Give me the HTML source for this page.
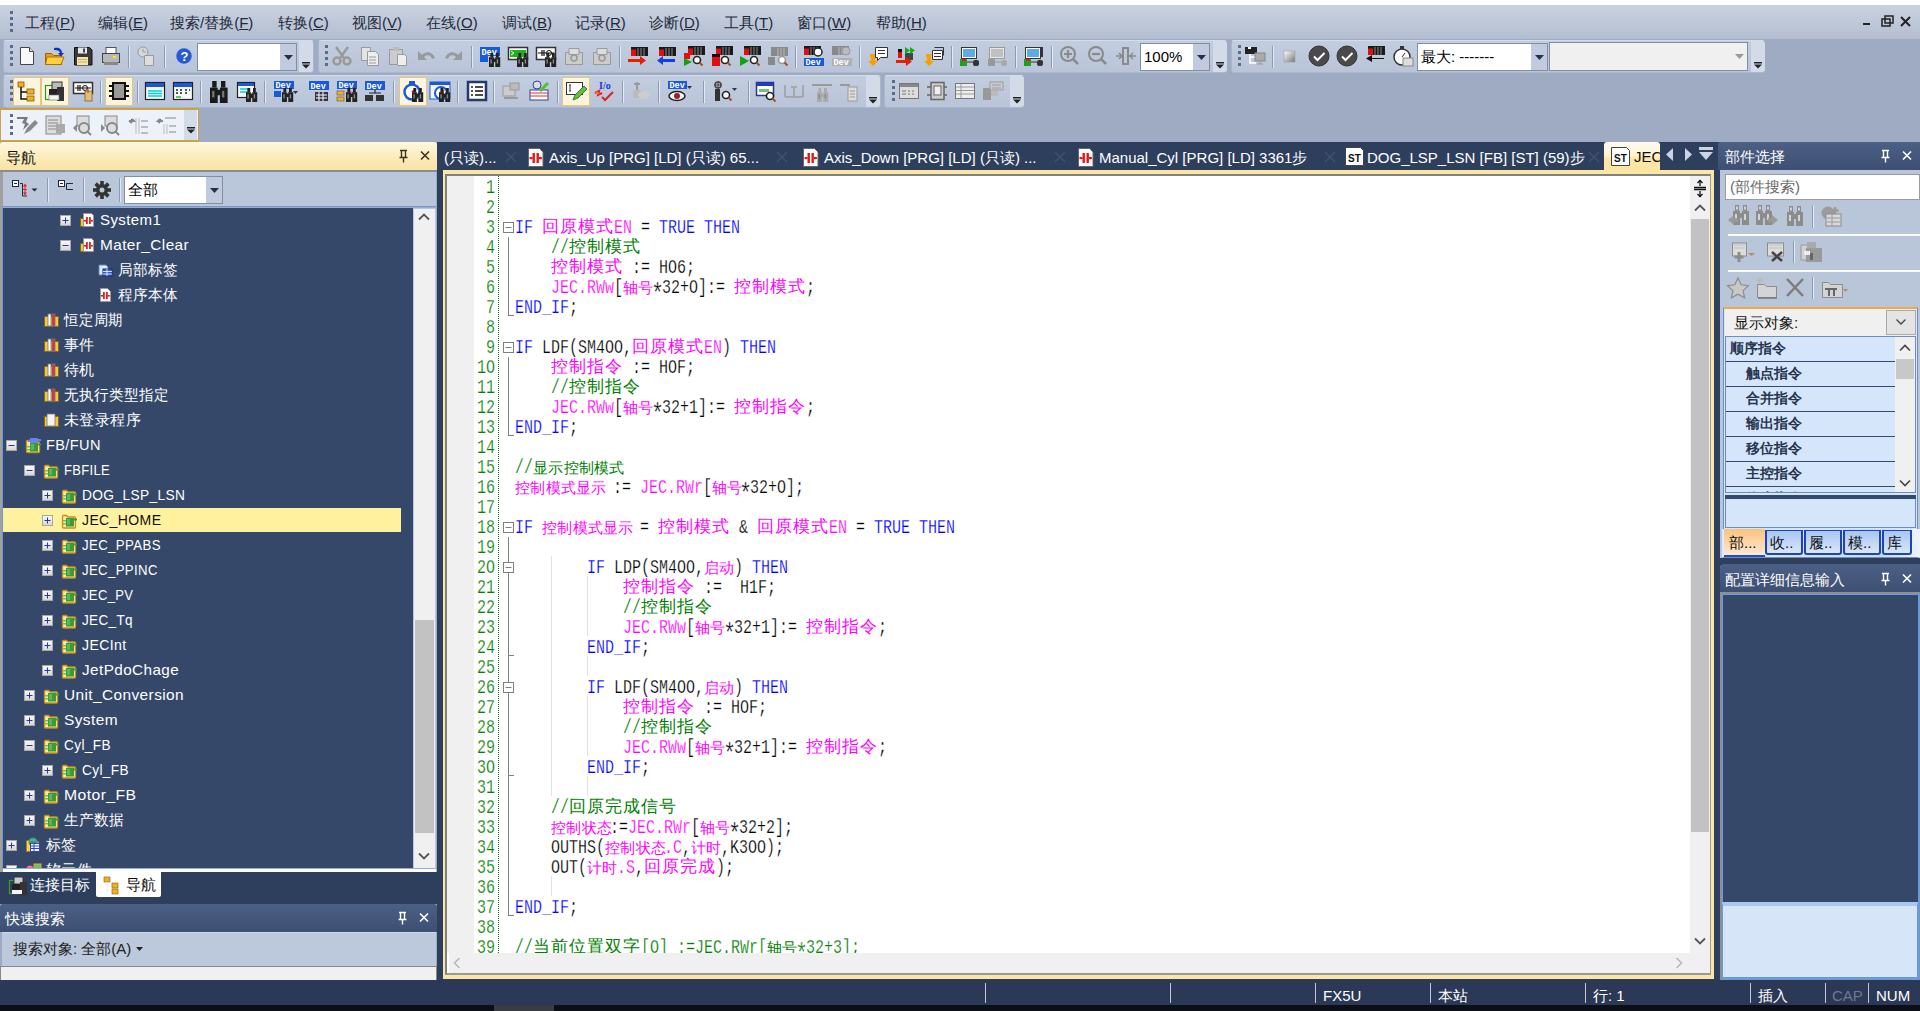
<!DOCTYPE html><html><head><meta charset="utf-8"><style>
*{margin:0;padding:0;box-sizing:border-box}
html,body{width:1920px;height:1011px;overflow:hidden;background:#9eabc3}
body{position:relative;font-family:"Liberation Sans",sans-serif;font-size:15px;color:#000}
div{position:absolute}
.t{white-space:nowrap;line-height:20px}
svg{position:absolute;overflow:visible}
.cd{position:absolute;white-space:pre;line-height:20px;height:20px}
.ca{font-family:"Liberation Mono",monospace;font-size:20.3px;transform:scaleX(.739);transform-origin:0 0;line-height:20px;top:1.65px;-webkit-text-stroke:.25px #fff}
.cc{font-size:17px;line-height:20px;top:1px}
.cs{font-size:14.5px;line-height:20px;top:2px}

.w{color:#fff}
.tb{border-radius:3px;background:linear-gradient(#c3cde0,#b9c4d8);border:1px solid #aab6cb;border-top-color:#d5ddea}
.grip{width:3px;height:3px;background:#5a6b8a;box-shadow:0 6px 0 #5a6b8a,0 12px 0 #5a6b8a,0 18px 0 #5a6b8a}
.sep{width:1px;background:#8e9ab0;border-right:1px solid #e0e6f0}
</style></head><body><div style="left:0px;top:0px;width:1920px;height:5px;background:#fff"></div><div style="left:0px;top:5px;width:1920px;height:34px;background:linear-gradient(#cad2e1,#b4bed1)"></div><div class="grip" style="left:10px;top:11px;width:3px;height:3px;"></div><div class="t" style="left:25px;top:13px;color:#1e2a3c;font-size:15px">工程(<u>P</u>)</div><div class="t" style="left:98px;top:13px;color:#1e2a3c;font-size:15px">编辑(<u>E</u>)</div><div class="t" style="left:170px;top:13px;color:#1e2a3c;font-size:15px">搜索/替换(<u>F</u>)</div><div class="t" style="left:278px;top:13px;color:#1e2a3c;font-size:15px">转换(<u>C</u>)</div><div class="t" style="left:352px;top:13px;color:#1e2a3c;font-size:15px">视图(<u>V</u>)</div><div class="t" style="left:426px;top:13px;color:#1e2a3c;font-size:15px">在线(<u>O</u>)</div><div class="t" style="left:502px;top:13px;color:#1e2a3c;font-size:15px">调试(<u>B</u>)</div><div class="t" style="left:575px;top:13px;color:#1e2a3c;font-size:15px">记录(<u>R</u>)</div><div class="t" style="left:649px;top:13px;color:#1e2a3c;font-size:15px">诊断(<u>D</u>)</div><div class="t" style="left:724px;top:13px;color:#1e2a3c;font-size:15px">工具(<u>T</u>)</div><div class="t" style="left:797px;top:13px;color:#1e2a3c;font-size:15px">窗口(<u>W</u>)</div><div class="t" style="left:876px;top:13px;color:#1e2a3c;font-size:15px">帮助(<u>H</u>)</div><svg style="left:1860px;top:14px" width="60" height="16"><rect x="3" y="9" width="7" height="2" fill="#222"/><rect x="22" y="5" width="8" height="7" fill="none" stroke="#222" stroke-width="1.5"/><rect x="25" y="2" width="8" height="7" fill="none" stroke="#222" stroke-width="1.5"/><path d="M41 3 L50 12 M50 3 L41 12" stroke="#222" stroke-width="2"/></svg><div class="tb" style="left:3px;top:40px;width:311px;height:33px;"></div><div class="tb" style="left:318px;top:40px;width:909px;height:33px;"></div><div class="tb" style="left:1231px;top:40px;width:534px;height:33px;"></div><div class="tb" style="left:3px;top:75px;width:878px;height:33px;"></div><div class="tb" style="left:884px;top:75px;width:140px;height:33px;"></div><div style="left:0px;top:108px;width:199px;height:34px;background:#edf2fa;border:2px solid #c9a24a;border-left-width:1px;border-right-width:1px"></div><div style="left:10px;top:45px;width:3px;height:3px;background:#5b6b8b"></div><div style="left:10px;top:51px;width:3px;height:3px;background:#5b6b8b"></div><div style="left:10px;top:57px;width:3px;height:3px;background:#5b6b8b"></div><div style="left:10px;top:63px;width:3px;height:3px;background:#5b6b8b"></div><svg style="left:16px;top:45px" width="22" height="22"><path d="M4.5 2.5h9l4 4v13h-13z" fill="#f8f8f8" stroke="#444"/><path d="M13.5 2.5v4h4" fill="#ddd" stroke="#444"/></svg><svg style="left:44px;top:45px" width="22" height="22"><path d="M1.5 8.5h6l2 2h8v9h-16z" fill="#e8a010" stroke="#a06000"/><path d="M3 12h17l-3 7.5H1.5z" fill="#fcd040" stroke="#b07000"/><path d="M10 3c5-1 8 1 8 5l2 0-3 3.5-3-3.5h2c0-2-2-3-6-3z" fill="#1030c0"/></svg><svg style="left:72px;top:45px" width="22" height="22"><path d="M2.5 2.5h15l2.5 2.5v15h-17.5z" fill="#3a3a3a" stroke="#111"/><rect x="6" y="2.5" width="9" height="6" fill="#e8e8e8"/><rect x="11" y="3.5" width="2" height="4" fill="#444"/><rect x="5" y="12" width="11" height="8" fill="#f4e4a8"/><path d="M6 14.5h9M6 17h9" stroke="#c8b070"/></svg><svg style="left:100px;top:45px" width="22" height="22"><rect x="6" y="2.5" width="10" height="6" fill="#fff" stroke="#555"/><rect x="2.5" y="8.5" width="17" height="9" fill="#b8b8b8" stroke="#444"/><rect x="4" y="17" width="14" height="3" fill="#888"/><rect x="13" y="11" width="3" height="2" fill="#f0f000"/></svg><div style="left:128px;top:46px;width:1px;height:22px;background:#8d9bb2;box-shadow:1px 0 0 #e4eaf3"></div><svg style="left:136px;top:45px" width="22" height="22"><circle cx="7" cy="7" r="5" fill="#d8d8d8" stroke="#9a9a9a"/><path d="M7 4v3h3" stroke="#9a9a9a" fill="none"/><path d="M8.5 10.5h9v10h-9z" fill="#ddd" stroke="#9a9a9a"/></svg><div style="left:164px;top:46px;width:1px;height:22px;background:#8d9bb2;box-shadow:1px 0 0 #e4eaf3"></div><svg style="left:173px;top:45px" width="22" height="22"><circle cx="11" cy="11" r="8.5" fill="#2a5ad0" stroke="#b8c8f0" stroke-width="1.5"/><text x="7.5" y="16" font-family="Liberation Sans" font-weight="bold" font-size="13" fill="#fff">?</text></svg><div style="left:197px;top:43px;width:100px;height:28px;background:#fff;border:1px solid #7f8fa8"></div><div style="left:280px;top:44px;width:16px;height:26px;background:#c1cbdd"></div><svg style="left:284px;top:55px" width="9" height="5"><path d="M0 0h9l-4.5 5z" fill="#233050"/></svg><div style="left:299px;top:41px;width:14px;height:31px;background:#d3dbe8;border-radius:0 3px 3px 0"></div><svg style="left:302px;top:62px" width="9" height="7"><rect x="0" y="0" width="8" height="1.5" fill="#222"/><path d="M0 2.5h8l-4 4z" fill="#222"/></svg><div style="left:325px;top:45px;width:3px;height:3px;background:#5b6b8b"></div><div style="left:325px;top:51px;width:3px;height:3px;background:#5b6b8b"></div><div style="left:325px;top:57px;width:3px;height:3px;background:#5b6b8b"></div><div style="left:325px;top:63px;width:3px;height:3px;background:#5b6b8b"></div><svg style="left:331px;top:45px" width="22" height="22"><path d="M5 2l8 11M17 2l-8 11" stroke="#9a9a9a" stroke-width="2.5"/><circle cx="6" cy="16" r="3.5" fill="none" stroke="#9a9a9a" stroke-width="2.5"/><circle cx="16" cy="16" r="3.5" fill="none" stroke="#9a9a9a" stroke-width="2.5"/></svg><svg style="left:359px;top:45px" width="22" height="22"><path d="M2.5 2.5h9v13h-9z" fill="#e4e4e4" stroke="#9a9a9a"/><path d="M8.5 6.5h8l3 3v11h-11z" fill="#eee" stroke="#9a9a9a"/><path d="M10 12h7M10 15h7M10 18h7" stroke="#9a9a9a"/></svg><svg style="left:387px;top:45px" width="22" height="22"><path d="M2.5 4.5h13v15h-13z" fill="#ccc" stroke="#9a9a9a"/><rect x="6" y="2" width="6" height="4" fill="#bbb"/><path d="M10.5 9.5h7l2 2v9h-9z" fill="#eee" stroke="#9a9a9a"/></svg><svg style="left:415px;top:45px" width="22" height="22"><path d="M3 6v9h9l-3-3c3-3 7-2 8 2l3-1c-2-6-9-8-13-3z" fill="#9a9a9a"/></svg><svg style="left:443px;top:45px" width="22" height="22"><path d="M19 6v9h-9l3-3c-3-3-7-2-8 2l-3-1c2-6 9-8 13-3z" fill="#9a9a9a"/></svg><div style="left:471px;top:46px;width:1px;height:22px;background:#8d9bb2;box-shadow:1px 0 0 #e4eaf3"></div><svg style="left:479px;top:45px" width="22" height="22"><rect x="1" y="2" width="20" height="9" fill="#1a5ad8"/><text x="2.5" y="10" font-family="Liberation Mono" font-size="8.5" font-weight="bold" fill="#fff">Dev</text><rect x="1" y="11" width="8" height="6" fill="#1a5ad8"/><g transform="translate(10,8) scale(0.7)"><rect x="2" y="0" width="4" height="6" fill="#222"/><rect x="10" y="0" width="4" height="6" fill="#222"/><rect x="0" y="6" width="7" height="14" fill="#222"/><rect x="9" y="6" width="7" height="14" fill="#222"/><rect x="6" y="8" width="4" height="5" fill="#222"/><rect x="2" y="9" width="2" height="6" fill="#888"/><rect x="11" y="9" width="2" height="6" fill="#888"/></g></svg><svg style="left:507px;top:45px" width="22" height="22"><rect x="1.5" y="2.5" width="19" height="12" fill="#fff" stroke="#333" stroke-width="1.5"/><rect x="3" y="5" width="16" height="7" fill="#20b020"/><path d="M4 6l3 2-3 2" stroke="#fff" fill="none"/><g transform="translate(10,8) scale(0.7)"><rect x="2" y="0" width="4" height="6" fill="#222"/><rect x="10" y="0" width="4" height="6" fill="#222"/><rect x="0" y="6" width="7" height="14" fill="#222"/><rect x="9" y="6" width="7" height="14" fill="#222"/><rect x="6" y="8" width="4" height="5" fill="#222"/><rect x="2" y="9" width="2" height="6" fill="#888"/><rect x="11" y="9" width="2" height="6" fill="#888"/></g></svg><svg style="left:535px;top:45px" width="22" height="22"><rect x="1.5" y="2.5" width="19" height="12" fill="#fff" stroke="#333" stroke-width="1.5"/><path d="M3 8h16M7 5v6M9 5v6" stroke="#111" stroke-width="1.2"/><circle cx="14" cy="8" r="2.5" fill="none" stroke="#111"/><g transform="translate(10,8) scale(0.7)"><rect x="2" y="0" width="4" height="6" fill="#222"/><rect x="10" y="0" width="4" height="6" fill="#222"/><rect x="0" y="6" width="7" height="14" fill="#222"/><rect x="9" y="6" width="7" height="14" fill="#222"/><rect x="6" y="8" width="4" height="5" fill="#222"/><rect x="2" y="9" width="2" height="6" fill="#888"/><rect x="11" y="9" width="2" height="6" fill="#888"/></g></svg><svg style="left:563px;top:45px" width="22" height="22"><path d="M2.5 7.5h17v12h-17z" fill="#ccc" stroke="#9a9a9a"/><path d="M6 3.5h10v6H6z" fill="#ddd" stroke="#9a9a9a"/><circle cx="11" cy="13" r="3" fill="none" stroke="#9a9a9a" stroke-width="1.5"/></svg><svg style="left:591px;top:45px" width="22" height="22"><path d="M2.5 7.5h17v12h-17z" fill="#ccc" stroke="#9a9a9a"/><path d="M6 3.5h10v6H6z" fill="#ddd" stroke="#9a9a9a"/><circle cx="11" cy="13" r="3" fill="none" stroke="#9a9a9a" stroke-width="1.5"/></svg><div style="left:619px;top:46px;width:1px;height:22px;background:#8d9bb2;box-shadow:1px 0 0 #e4eaf3"></div><svg style="left:627px;top:45px" width="22" height="22"><rect x="4" y="2" width="17" height="9" fill="#1a1a1a"/><rect x="4" y="2" width="5" height="9" fill="#e01010"/><rect x="4" y="2" width="5" height="2.5" fill="#1a1a1a"/><path d="M11 3v8M14 3v8M17 3v8" stroke="#777" stroke-width="1.2"/><path d="M1 14h12v-3l6 4.5-6 4.5v-3H1z" fill="#e82000"/></svg><svg style="left:655px;top:45px" width="22" height="22"><rect x="4" y="2" width="17" height="9" fill="#1a1a1a"/><rect x="4" y="2" width="5" height="9" fill="#e01010"/><rect x="4" y="2" width="5" height="2.5" fill="#1a1a1a"/><path d="M11 3v8M14 3v8M17 3v8" stroke="#777" stroke-width="1.2"/><path d="M20 14H8v-3l-6 4.5 6 4.5v-3h12z" fill="#1040e0"/></svg><svg style="left:683px;top:45px" width="22" height="22"><rect x="5" y="1" width="17" height="9" fill="#1a1a1a"/><rect x="5" y="1" width="5" height="9" fill="#e01010"/><rect x="5" y="1" width="5" height="2.5" fill="#1a1a1a"/><path d="M12 2v8M15 2v8M18 2v8" stroke="#777" stroke-width="1.2"/><rect x="1" y="8" width="6" height="6" fill="#e01010"/><path d="M1 13l8 4-8 4z" fill="#10a010"/><circle cx="14" cy="15" r="3.5" fill="#fff" stroke="#222" stroke-width="1.6"/><path d="M16.5 17.5l3 3" stroke="#a05020" stroke-width="2"/></svg><svg style="left:711px;top:45px" width="22" height="22"><rect x="5" y="1" width="17" height="9" fill="#1a1a1a"/><rect x="5" y="1" width="5" height="9" fill="#e01010"/><rect x="5" y="1" width="5" height="2.5" fill="#1a1a1a"/><path d="M12 2v8M15 2v8M18 2v8" stroke="#777" stroke-width="1.2"/><rect x="1" y="9" width="8" height="12" fill="#e01010"/><rect x="1" y="9" width="8" height="3" fill="#111"/><circle cx="14" cy="15" r="3.5" fill="#fff" stroke="#222" stroke-width="1.6"/><path d="M16.5 17.5l3 3" stroke="#a05020" stroke-width="2"/></svg><svg style="left:739px;top:45px" width="22" height="22"><rect x="5" y="1" width="17" height="9" fill="#1a1a1a"/><rect x="5" y="1" width="5" height="9" fill="#e01010"/><rect x="5" y="1" width="5" height="2.5" fill="#1a1a1a"/><path d="M12 2v8M15 2v8M18 2v8" stroke="#777" stroke-width="1.2"/><path d="M1 11l9 5-9 5z" fill="#10a010"/><circle cx="15" cy="15" r="3.5" fill="#fff" stroke="#222" stroke-width="1.6"/><path d="M17.5 17.5l3 3" stroke="#a05020" stroke-width="2"/></svg><svg style="left:767px;top:45px" width="22" height="22"><rect x="4" y="2" width="17" height="9" fill="#8a8a8a"/><rect x="4" y="2" width="5" height="9" fill="#888"/><rect x="4" y="2" width="5" height="2.5" fill="#8a8a8a"/><path d="M11 3v8M14 3v8M17 3v8" stroke="#b0b0b0" stroke-width="1.2"/><rect x="1" y="12" width="7" height="8" fill="#8a8a8a"/><circle cx="15" cy="15" r="3.5" fill="#fff" stroke="#999" stroke-width="1.6"/><path d="M17.5 17.5l3 3" stroke="#a05020" stroke-width="2"/></svg><div style="left:795px;top:46px;width:1px;height:22px;background:#8d9bb2;box-shadow:1px 0 0 #e4eaf3"></div><svg style="left:803px;top:45px" width="22" height="22"><rect x="1" y="1" width="17" height="9" fill="#1a1a1a"/><rect x="1" y="1" width="5" height="9" fill="#e01010"/><rect x="1" y="1" width="5" height="2.5" fill="#1a1a1a"/><path d="M8 2v8M11 2v8M14 2v8" stroke="#777" stroke-width="1.2"/><circle cx="15" cy="7" r="4" fill="#fff" stroke="#222" stroke-width="1.5"/><rect x="1" y="13" width="20" height="8" fill="#1a5ad8"/><text x="2.5" y="20" font-family="Liberation Mono" font-size="8.5" font-weight="bold" fill="#fff">Dev</text></svg><svg style="left:831px;top:45px" width="22" height="22"><rect x="1" y="1" width="17" height="9" fill="#8a8a8a"/><rect x="1" y="1" width="5" height="9" fill="#888"/><rect x="1" y="1" width="5" height="2.5" fill="#8a8a8a"/><path d="M8 2v8M11 2v8M14 2v8" stroke="#b0b0b0" stroke-width="1.2"/><circle cx="15" cy="6" r="4" fill="#bbb" stroke="#999"/><rect x="1" y="13" width="20" height="8" fill="#b0b0b0"/><text x="2.5" y="20" font-family="Liberation Mono" font-size="8.5" font-weight="bold" fill="#fff">Dev</text></svg><div style="left:859px;top:46px;width:1px;height:22px;background:#8d9bb2;box-shadow:1px 0 0 #e4eaf3"></div><svg style="left:867px;top:45px" width="22" height="22"><path d="M8.5 2.5h12v10h-7l-3 3v-3h-2z" fill="#fff" stroke="#333"/><path d="M11 5.5h7M11 8.5h7" stroke="#333"/><path d="M3 9h5v7h3l-5 5-5-5h3v-4H3z" fill="#f8a000"/></svg><svg style="left:895px;top:45px" width="22" height="22"><rect x="3" y="6" width="4" height="7" fill="#e01010"/><rect x="3" y="4" width="4" height="3" fill="#111"/><rect x="10" y="8" width="8" height="7" fill="#444"/><path d="M10 2l5 3.5-5 3.5zM15 2l5 3.5-5 3.5z" fill="#10b010"/><path d="M1 15h10v-3l6 4.5-6 4.5v-3H1z" fill="#e82000"/></svg><svg style="left:923px;top:45px" width="22" height="22"><path d="M9.5 5.5h10v9h-10z" fill="#fff" stroke="#333"/><path d="M11.5 2.5h9v8" fill="none" stroke="#333"/><path d="M11 8.5h7M11 11.5h7" stroke="#333"/><path d="M3 9h5v7h3l-5 5-5-5h3v-4H3z" fill="#f8a000"/></svg><div style="left:951px;top:46px;width:1px;height:22px;background:#8d9bb2;box-shadow:1px 0 0 #e4eaf3"></div><svg style="left:959px;top:45px" width="22" height="22"><rect x="2.5" y="2.5" width="15" height="11" fill="#fff" stroke="#333"/><rect x="4" y="4" width="12" height="8" fill="#60a8f0"/><rect x="1" y="14" width="7" height="7" fill="#20a020"/><rect x="3" y="14" width="4" height="2" fill="#e02020"/><path d="M8 17h6" stroke="#333"/><rect x="14" y="15" width="6" height="6" rx="2" fill="#333"/></svg><svg style="left:987px;top:45px" width="22" height="22"><rect x="2.5" y="2.5" width="15" height="11" fill="#e8e8e8" stroke="#9a9a9a"/><rect x="4" y="4" width="12" height="8" fill="#c0c0c0"/><rect x="1" y="14" width="7" height="7" fill="#999"/><path d="M8 17h6" stroke="#9a9a9a"/><rect x="14" y="15" width="6" height="6" rx="2" fill="#aaa"/></svg><div style="left:1015px;top:46px;width:1px;height:22px;background:#8d9bb2;box-shadow:1px 0 0 #e4eaf3"></div><svg style="left:1023px;top:45px" width="22" height="22"><rect x="2.5" y="2.5" width="15" height="11" fill="#fff" stroke="#333"/><rect x="4" y="4" width="12" height="8" fill="#60a8f0"/><path d="M19 2v10" stroke="#333" stroke-width="2"/><rect x="1" y="14" width="7" height="7" fill="#20a020"/><rect x="3" y="14" width="4" height="2" fill="#e02020"/><path d="M8 17h6" stroke="#333"/><rect x="14" y="15" width="6" height="6" rx="2" fill="#333"/></svg><div style="left:1051px;top:46px;width:1px;height:22px;background:#8d9bb2;box-shadow:1px 0 0 #e4eaf3"></div><svg style="left:1059px;top:45px" width="22" height="22"><circle cx="9" cy="9" r="7" fill="none" stroke="#8a8a8a" stroke-width="2"/><path d="M5 9h8M9 5v8" stroke="#8a8a8a" stroke-width="2.2"/><path d="M14 14l5 5" stroke="#8a8a8a" stroke-width="2.5"/></svg><svg style="left:1087px;top:45px" width="22" height="22"><circle cx="9" cy="9" r="7" fill="none" stroke="#8a8a8a" stroke-width="2"/><path d="M5 9h8" stroke="#8a8a8a" stroke-width="2.2"/><path d="M14 14l5 5" stroke="#8a8a8a" stroke-width="2.5"/></svg><svg style="left:1115px;top:45px" width="22" height="22"><rect x="8" y="3" width="5" height="16" fill="none" stroke="#8a8a8a" stroke-width="2"/><path d="M1 11h6M14 11h7M4 8l3 3-3 3M18 8l-3 3 3 3" stroke="#8a8a8a" stroke-width="1.5" fill="none"/></svg><div style="left:1140px;top:43px;width:70px;height:28px;background:#fff;border:1px solid #7f8fa8"></div><div style="left:1193px;top:44px;width:16px;height:26px;background:#c1cbdd"></div><svg style="left:1197px;top:55px" width="9" height="5"><path d="M0 0h9l-4.5 5z" fill="#233050"/></svg><div class="t" style="left:1144px;top:47px">100%</div><div style="left:1213px;top:41px;width:14px;height:31px;background:#d3dbe8;border-radius:0 3px 3px 0"></div><svg style="left:1216px;top:62px" width="9" height="7"><rect x="0" y="0" width="8" height="1.5" fill="#222"/><path d="M0 2.5h8l-4 4z" fill="#222"/></svg><div style="left:1238px;top:45px;width:3px;height:3px;background:#5b6b8b"></div><div style="left:1238px;top:51px;width:3px;height:3px;background:#5b6b8b"></div><div style="left:1238px;top:57px;width:3px;height:3px;background:#5b6b8b"></div><div style="left:1238px;top:63px;width:3px;height:3px;background:#5b6b8b"></div><svg style="left:1244px;top:45px" width="22" height="22"><rect x="1" y="2" width="12" height="7" fill="#222"/><rect x="4" y="2" width="3" height="2" fill="#fff"/><path d="M6 9v9h6M6 12h6" stroke="#fff" stroke-width="1.5" fill="none"/><rect x="11" y="8" width="10" height="8" fill="#aaa" stroke="#888"/><path d="M16 16v3M13 19h6" stroke="#999"/></svg><div style="left:1272px;top:46px;width:1px;height:22px;background:#8d9bb2;box-shadow:1px 0 0 #e4eaf3"></div><svg style="left:1279px;top:45px" width="22" height="22"><defs><linearGradient id="sq" x1="0" y1="0" x2="1" y2="1"><stop offset="0" stop-color="#fff"/><stop offset="1" stop-color="#777"/></linearGradient></defs><rect x="5" y="6" width="11" height="11" fill="url(#sq)" stroke="#999" stroke-width=".5"/></svg><svg style="left:1308px;top:45px" width="22" height="22"><circle cx="11" cy="11" r="10" fill="#4a4a4a" stroke="#333"/><path d="M6 11.5l3.5 3.5 7-7" stroke="#fff" stroke-width="2" fill="none"/></svg><svg style="left:1336px;top:45px" width="22" height="22"><circle cx="11" cy="11" r="10" fill="#4a4a4a" stroke="#333"/><path d="M6 11.5l3.5 3.5 7-7" stroke="#fff" stroke-width="2" fill="none"/></svg><svg style="left:1364px;top:45px" width="22" height="22"><rect x="4" y="1" width="17" height="9" fill="#1a1a1a"/><rect x="4" y="1" width="5" height="9" fill="#e01010"/><rect x="4" y="1" width="5" height="2.5" fill="#1a1a1a"/><path d="M11 2v8M14 2v8M17 2v8" stroke="#777" stroke-width="1.2"/><path d="M20 13H8v-3l-6 3.5 6 3.5v-3h12z" fill="#111"/></svg><svg style="left:1392px;top:45px" width="22" height="22"><circle cx="10" cy="12" r="8" fill="#fff" stroke="#333" stroke-width="1.5"/><rect x="8" y="1" width="4" height="3" fill="#333"/><path d="M10 12l3-4" stroke="#333"/><rect x="11" y="13" width="10" height="8" fill="#ddd" stroke="#888"/></svg><div style="left:1417px;top:43px;width:131px;height:28px;background:#fff;border:1px solid #7f8fa8"></div><div style="left:1531px;top:44px;width:16px;height:26px;background:#c1cbdd"></div><svg style="left:1535px;top:55px" width="9" height="5"><path d="M0 0h9l-4.5 5z" fill="#233050"/></svg><div class="t" style="left:1421px;top:47px">最大: -------</div><div style="left:1549px;top:42px;width:199px;height:29px;background:#f0f0f0;border:1px solid #7f8fa8"></div><svg style="left:1735px;top:54px" width="9" height="5"><path d="M0 0h9l-4.5 5z" fill="#999"/></svg><div style="left:1751px;top:41px;width:14px;height:31px;background:#d3dbe8;border-radius:0 3px 3px 0"></div><svg style="left:1754px;top:62px" width="9" height="7"><rect x="0" y="0" width="8" height="1.5" fill="#222"/><path d="M0 2.5h8l-4 4z" fill="#222"/></svg><div style="left:10px;top:80px;width:3px;height:3px;background:#5b6b8b"></div><div style="left:10px;top:86px;width:3px;height:3px;background:#5b6b8b"></div><div style="left:10px;top:92px;width:3px;height:3px;background:#5b6b8b"></div><div style="left:10px;top:98px;width:3px;height:3px;background:#5b6b8b"></div><div style="left:13px;top:77px;width:28px;height:29px;background:#fdf4dd;border:1px solid #e9c57a"></div><div style="left:41px;top:77px;width:28px;height:29px;background:#fdf4dd;border:1px solid #e9c57a"></div><div style="left:105px;top:77px;width:28px;height:29px;background:#fdf4dd;border:1px solid #e9c57a"></div><div style="left:399px;top:77px;width:28px;height:29px;background:#fdf4dd;border:1px solid #e9c57a"></div><div style="left:562px;top:77px;width:28px;height:29px;background:#fdf4dd;border:1px solid #e9c57a"></div><svg style="left:16px;top:80px" width="22" height="22"><rect x="2" y="2" width="6" height="5" fill="#f0b020" stroke="#806010" stroke-width=".8"/><path d="M5 7v12h6M5 12h6" stroke="#111" stroke-width="1.5" fill="none"/><rect x="11" y="9" width="7" height="5" fill="#f0b020" stroke="#806010" stroke-width=".8"/><rect x="11" y="16" width="7" height="5" fill="#f0b020" stroke="#806010" stroke-width=".8"/></svg><svg style="left:44px;top:80px" width="22" height="22"><rect x="1.5" y="5.5" width="12" height="14" fill="none" stroke="#20a020" stroke-width="1.2"/><rect x="8" y="2" width="10" height="8" fill="#bbb" stroke="#333"/><rect x="5" y="9" width="10" height="6" fill="#222"/><rect x="13" y="7" width="7" height="14" fill="#333"/><rect x="5" y="15" width="10" height="5" fill="#f4f4f4" stroke="#777" stroke-width=".6"/></svg><svg style="left:72px;top:80px" width="22" height="22"><rect x="1.5" y="2.5" width="19" height="11" fill="#fff" stroke="#333" stroke-width="1.5"/><path d="M3 8h16M6 5v6M8 5v6" stroke="#111" stroke-width="1.2"/><circle cx="13" cy="8" r="2.5" fill="none" stroke="#111"/><rect x="13" y="11" width="7" height="10" fill="#e0c080" stroke="#806010" stroke-width=".8"/><path d="M16 9v4" stroke="#e06000" stroke-width="1.5"/></svg><div style="left:100px;top:81px;width:1px;height:22px;background:#8d9bb2;box-shadow:1px 0 0 #e4eaf3"></div><svg style="left:108px;top:80px" width="22" height="22"><rect x="5" y="3" width="12" height="16" fill="#999" stroke="#111" stroke-width="2"/><path d="M1 6h4M1 11h4M1 16h4M17 6h4M17 11h4M17 16h4" stroke="#111" stroke-width="2"/></svg><div style="left:137px;top:81px;width:1px;height:22px;background:#8d9bb2;box-shadow:1px 0 0 #e4eaf3"></div><svg style="left:144px;top:80px" width="22" height="22"><rect x="1.5" y="2.5" width="19" height="17" fill="#f8f8f8" stroke="#222" stroke-width="1.2"/><rect x="2" y="3" width="18" height="4" fill="#1a5ad8"/><path d="M4 11h14M4 13.5h14M4 16h14" stroke="#00d0e0" stroke-width="1.5"/></svg><svg style="left:172px;top:80px" width="22" height="22"><rect x="1.5" y="2.5" width="19" height="17" fill="#f8f8f8" stroke="#222" stroke-width="1.2"/><rect x="2" y="3" width="18" height="4" fill="#1a5ad8"/><path d="M4 10h2M8 10h2M13 10h2M17 10h1M4 13h2M8 13h2M13 13h2" stroke="#222" stroke-width="1.5"/><path d="M4 17h5" stroke="#20c020" stroke-width="1.5"/></svg><div style="left:200px;top:81px;width:1px;height:22px;background:#8d9bb2;box-shadow:1px 0 0 #e4eaf3"></div><svg style="left:208px;top:80px" width="22" height="22"><g transform="translate(2,1) scale(1.1)"><rect x="2" y="0" width="4" height="6" fill="#1a1a1a"/><rect x="10" y="0" width="4" height="6" fill="#1a1a1a"/><rect x="0" y="6" width="7" height="14" fill="#1a1a1a"/><rect x="9" y="6" width="7" height="14" fill="#1a1a1a"/><rect x="6" y="8" width="4" height="5" fill="#1a1a1a"/><rect x="2" y="9" width="2" height="6" fill="#777"/><rect x="11" y="9" width="2" height="6" fill="#777"/></g></svg><svg style="left:236px;top:80px" width="22" height="22"><rect x="1.5" y="2.5" width="17" height="15" fill="#f8f8f8" stroke="#222" stroke-width="1.2"/><rect x="2" y="3" width="16" height="3" fill="#1a5ad8"/><path d="M4 9h10M4 12h8" stroke="#00d0e0" stroke-width="1.5"/><g transform="translate(10,8) scale(0.7)"><rect x="2" y="0" width="4" height="6" fill="#222"/><rect x="10" y="0" width="4" height="6" fill="#222"/><rect x="0" y="6" width="7" height="14" fill="#222"/><rect x="9" y="6" width="7" height="14" fill="#222"/><rect x="6" y="8" width="4" height="5" fill="#222"/><rect x="2" y="9" width="2" height="6" fill="#888"/><rect x="11" y="9" width="2" height="6" fill="#888"/></g></svg><div style="left:264px;top:81px;width:1px;height:22px;background:#8d9bb2;box-shadow:1px 0 0 #e4eaf3"></div><svg style="left:273px;top:80px" width="22" height="22"><rect x="1" y="1" width="20" height="8" fill="#1a5ad8"/><text x="2.5" y="8" font-family="Liberation Mono" font-size="8.5" font-weight="bold" fill="#fff">Dev</text><rect x="1" y="11" width="7" height="6" fill="#1a5ad8"/><g transform="translate(9,8) scale(0.7)"><rect x="2" y="0" width="4" height="6" fill="#222"/><rect x="10" y="0" width="4" height="6" fill="#222"/><rect x="0" y="6" width="7" height="14" fill="#222"/><rect x="9" y="6" width="7" height="14" fill="#222"/><rect x="6" y="8" width="4" height="5" fill="#222"/><rect x="2" y="9" width="2" height="6" fill="#888"/><rect x="11" y="9" width="2" height="6" fill="#888"/></g><path d="M20 11h5l-2.5 3z" fill="#334"/></svg><svg style="left:308px;top:80px" width="22" height="22"><rect x="1" y="1" width="20" height="9" fill="#1a5ad8"/><text x="2.5" y="9" font-family="Liberation Mono" font-size="8.5" font-weight="bold" fill="#fff">Dev</text><rect x="7" y="12" width="13" height="9" fill="#334"/><path d="M8 15h11M8 18h11M11 12v9M15 12v9" stroke="#fff"/></svg><svg style="left:336px;top:80px" width="22" height="22"><rect x="1" y="1" width="20" height="8" fill="#1a5ad8"/><text x="2.5" y="8" font-family="Liberation Mono" font-size="8.5" font-weight="bold" fill="#fff">Dev</text><rect x="1" y="11" width="7" height="4" fill="#f0b020" stroke="#555" stroke-width=".6"/><rect x="1" y="17" width="7" height="4" fill="#f0b020" stroke="#555" stroke-width=".6"/><rect x="13" y="11" width="7" height="3" fill="#f080a0"/><g transform="translate(10,8) scale(0.7)"><rect x="2" y="0" width="4" height="6" fill="#222"/><rect x="10" y="0" width="4" height="6" fill="#222"/><rect x="0" y="6" width="7" height="14" fill="#222"/><rect x="9" y="6" width="7" height="14" fill="#222"/><rect x="6" y="8" width="4" height="5" fill="#222"/><rect x="2" y="9" width="2" height="6" fill="#888"/><rect x="11" y="9" width="2" height="6" fill="#888"/></g></svg><svg style="left:364px;top:80px" width="22" height="22"><rect x="1" y="1" width="20" height="9" fill="#1a5ad8"/><text x="2.5" y="9" font-family="Liberation Mono" font-size="8.5" font-weight="bold" fill="#fff">Dev</text><path d="M11 10v3M5 13h12" stroke="#222" stroke-width="1.2"/><rect x="1" y="15" width="8" height="6" fill="#333"/><rect x="12" y="15" width="8" height="6" fill="#333"/></svg><div style="left:393px;top:81px;width:1px;height:22px;background:#8d9bb2;box-shadow:1px 0 0 #e4eaf3"></div><svg style="left:402px;top:80px" width="22" height="22"><circle cx="10" cy="12" r="7.5" fill="#fff" stroke="#1a5ad8" stroke-width="2.5"/><rect x="7" y="1" width="6" height="3" fill="#1a5ad8"/><path d="M10 12l4-3" stroke="#e02020" stroke-width="2"/><g transform="translate(10,8) scale(0.7)"><rect x="2" y="0" width="4" height="6" fill="#222"/><rect x="10" y="0" width="4" height="6" fill="#222"/><rect x="0" y="6" width="7" height="14" fill="#222"/><rect x="9" y="6" width="7" height="14" fill="#222"/><rect x="6" y="8" width="4" height="5" fill="#222"/><rect x="2" y="9" width="2" height="6" fill="#888"/><rect x="11" y="9" width="2" height="6" fill="#888"/></g></svg><svg style="left:429px;top:80px" width="22" height="22"><rect x="1" y="2" width="20" height="17" fill="#f4f4f4" stroke="#1a5ad8"/><rect x="1" y="2" width="20" height="3" fill="#1a5ad8"/><circle cx="12" cy="13" r="6" fill="#fff" stroke="#1a5ad8" stroke-width="2"/><path d="M12 13l3-3" stroke="#e02020" stroke-width="2"/><g transform="translate(10,8) scale(0.7)"><rect x="2" y="0" width="4" height="6" fill="#222"/><rect x="10" y="0" width="4" height="6" fill="#222"/><rect x="0" y="6" width="7" height="14" fill="#222"/><rect x="9" y="6" width="7" height="14" fill="#222"/><rect x="6" y="8" width="4" height="5" fill="#222"/><rect x="2" y="9" width="2" height="6" fill="#888"/><rect x="11" y="9" width="2" height="6" fill="#888"/></g></svg><div style="left:457px;top:81px;width:1px;height:22px;background:#8d9bb2;box-shadow:1px 0 0 #e4eaf3"></div><svg style="left:466px;top:80px" width="22" height="22"><rect x="2" y="2" width="18" height="18" fill="#fff" stroke="#223a70" stroke-width="2.5"/><path d="M9 7h8M9 11h8M9 15h8" stroke="#111" stroke-width="1.5"/><rect x="5" y="6" width="2" height="2" fill="#555"/><rect x="5" y="10" width="2" height="2" fill="#555"/><rect x="5" y="14" width="2" height="2" fill="#555"/></svg><div style="left:493px;top:81px;width:1px;height:22px;background:#8d9bb2;box-shadow:1px 0 0 #e4eaf3"></div><svg style="left:500px;top:80px" width="22" height="22"><rect x="3" y="6" width="12" height="10" fill="#ccc" stroke="#9a9a9a"/><rect x="10" y="3" width="9" height="7" fill="#bbb" stroke="#9a9a9a"/><path d="M4 18h14" stroke="#9a9a9a" stroke-width="2"/></svg><svg style="left:528px;top:80px" width="22" height="22"><rect x="2" y="10" width="18" height="10" fill="#fff" stroke="#3040a0"/><path d="M2 13h18M2 16h18" stroke="#e03030"/><circle cx="9" cy="5" r="4" fill="#ddd" stroke="#3040a0"/><path d="M12 11l8-8" stroke="#50c030" stroke-width="3"/></svg><div style="left:557px;top:81px;width:1px;height:22px;background:#8d9bb2;box-shadow:1px 0 0 #e4eaf3"></div><svg style="left:565px;top:80px" width="22" height="22"><rect x="1.5" y="2.5" width="16" height="12" fill="#fff" stroke="#333"/><path d="M5 5v6M4 5h2M4 11h2" stroke="#333"/><path d="M8 20l2-5 9-9 3 3-9 9z" fill="#60c040" stroke="#306020" stroke-width=".8"/></svg><svg style="left:594px;top:80px" width="22" height="22"><text x="5" y="9" font-family="Liberation Serif" font-weight="bold" font-size="10" fill="#1a3ad8">I/o</text><path d="M1 13l4-2-1 4 4-2M8 17l3 3 8-8" stroke="#e02020" stroke-width="2" fill="none"/><path d="M2 12l3 2" stroke="#f08000" stroke-width="2"/></svg><div style="left:622px;top:81px;width:1px;height:22px;background:#8d9bb2;box-shadow:1px 0 0 #e4eaf3"></div><svg style="left:629px;top:80px" width="22" height="22"><path d="M4 10h8v8H4z" fill="#bbb"/><path d="M8 2v8M5 4h6" stroke="#9a9a9a" stroke-width="2"/><ellipse cx="15" cy="15" rx="6" ry="4" fill="#ccc"/></svg><div style="left:658px;top:81px;width:1px;height:22px;background:#8d9bb2;box-shadow:1px 0 0 #e4eaf3"></div><svg style="left:666px;top:80px" width="22" height="22"><rect x="2" y="1" width="19" height="8" fill="#1a5ad8"/><text x="3.5" y="8" font-family="Liberation Mono" font-size="8.5" font-weight="bold" fill="#fff">Dev</text><path d="M21 6h5l-2.5 3z" fill="#334"/><ellipse cx="11" cy="16" rx="8" ry="4.5" fill="#f4f4f4" stroke="#222" stroke-width="1.5"/><circle cx="11" cy="16" r="3" fill="#a02020"/></svg><div style="left:703px;top:81px;width:1px;height:22px;background:#8d9bb2;box-shadow:1px 0 0 #e4eaf3"></div><svg style="left:711px;top:80px" width="22" height="22"><circle cx="7" cy="5" r="3" fill="none" stroke="#444" stroke-width="1.5"/><path d="M3 5h8M7 1v8" stroke="#444"/><rect x="4" y="9" width="5" height="12" fill="#333"/><circle cx="15" cy="15" r="3.5" fill="#fff" stroke="#222" stroke-width="1.6"/><path d="M17.5 17.5l3 3" stroke="#a05020" stroke-width="2"/><path d="M21 8h5l-2.5 3z" fill="#334"/></svg><div style="left:748px;top:81px;width:1px;height:22px;background:#8d9bb2;box-shadow:1px 0 0 #e4eaf3"></div><svg style="left:755px;top:80px" width="22" height="22"><rect x="1.5" y="2.5" width="17" height="13" fill="#fff" stroke="#223a90" stroke-width="1.5"/><rect x="2" y="3" width="16" height="3" fill="#1a3ad8"/><rect x="4" y="9" width="10" height="3" fill="#7ac07a"/><circle cx="15" cy="16" r="3.5" fill="#fff" stroke="#222" stroke-width="1.6"/><path d="M17.5 18.5l3 3" stroke="#a05020" stroke-width="2"/></svg><svg style="left:783px;top:80px" width="22" height="22"><path d="M2 5v12M20 5v12M2 17h18M11 7v10M8 7h6" stroke="#9a9a9a" stroke-width="2" fill="none" opacity=".7"/></svg><svg style="left:811px;top:80px" width="22" height="22"><path d="M1 5h20" stroke="#9a9a9a" stroke-width="2"/><g transform="translate(6,8) scale(0.7)"><rect x="2" y="0" width="4" height="6" fill="#aaa"/><rect x="10" y="0" width="4" height="6" fill="#aaa"/><rect x="0" y="6" width="7" height="14" fill="#aaa"/><rect x="9" y="6" width="7" height="14" fill="#aaa"/><rect x="6" y="8" width="4" height="5" fill="#aaa"/><rect x="2" y="9" width="2" height="6" fill="#888"/><rect x="11" y="9" width="2" height="6" fill="#888"/></g></svg><svg style="left:839px;top:80px" width="22" height="22"><path d="M1 5h10" stroke="#9a9a9a" stroke-width="2"/><rect x="9" y="7" width="9" height="14" fill="#ddd" stroke="#9a9a9a"/><path d="M11 11h5M11 14h5M11 17h5" stroke="#9a9a9a"/></svg><div style="left:866px;top:76px;width:14px;height:31px;background:#d3dbe8;border-radius:0 3px 3px 0"></div><svg style="left:869px;top:97px" width="9" height="7"><rect x="0" y="0" width="8" height="1.5" fill="#222"/><path d="M0 2.5h8l-4 4z" fill="#222"/></svg><div style="left:892px;top:80px;width:3px;height:3px;background:#5b6b8b"></div><div style="left:892px;top:86px;width:3px;height:3px;background:#5b6b8b"></div><div style="left:892px;top:92px;width:3px;height:3px;background:#5b6b8b"></div><div style="left:892px;top:98px;width:3px;height:3px;background:#5b6b8b"></div><svg style="left:898px;top:80px" width="22" height="22"><rect x="1.5" y="3.5" width="19" height="15" fill="#ddd" stroke="#777"/><rect x="2" y="4" width="18" height="3" fill="#888"/><path d="M4 11h4M10 11h2M14 11h2M4 14h4M10 14h2M14 14h2" stroke="#777"/></svg><svg style="left:926px;top:80px" width="22" height="22"><rect x="5" y="2.5" width="13" height="17" fill="#ccc" stroke="#666" stroke-width="1.5"/><rect x="8" y="6" width="7" height="9" fill="#eee" stroke="#666"/><path d="M1 7h4M1 15h4M18 7h3M18 15h3" stroke="#666" stroke-width="1.5"/></svg><svg style="left:954px;top:80px" width="22" height="22"><rect x="1.5" y="3.5" width="19" height="15" fill="#eee" stroke="#777"/><path d="M2 7h18M2 10.5h18M2 14h18M7 4v14" stroke="#999"/></svg><svg style="left:982px;top:80px" width="22" height="22"><rect x="1" y="8" width="8" height="12" fill="#999"/><rect x="8" y="2" width="13" height="8" fill="#ccc" stroke="#9a9a9a"/><path d="M10 5h9M10 8h9" stroke="#999"/><rect x="9" y="11" width="7" height="5" fill="#bbb"/></svg><div style="left:1010px;top:76px;width:14px;height:31px;background:#d3dbe8;border-radius:0 3px 3px 0"></div><svg style="left:1013px;top:97px" width="9" height="7"><rect x="0" y="0" width="8" height="1.5" fill="#222"/><path d="M0 2.5h8l-4 4z" fill="#222"/></svg><div style="left:10px;top:114px;width:3px;height:3px;background:#5b6b8b"></div><div style="left:10px;top:120px;width:3px;height:3px;background:#5b6b8b"></div><div style="left:10px;top:126px;width:3px;height:3px;background:#5b6b8b"></div><div style="left:10px;top:132px;width:3px;height:3px;background:#5b6b8b"></div><svg style="left:16px;top:114px" width="22" height="22"><path d="M1 3h11l-2 5 3 2-6 6 2-6-3-1 2-4H1z" fill="#7a7a7a"/><path d="M8 20l3-6 8-8 3 3-8 8z" fill="#8a8a8a"/></svg><svg style="left:44px;top:114px" width="22" height="22"><rect x="2" y="2" width="15" height="18" fill="#ddd" stroke="#888"/><path d="M4 6h10M4 9h10M4 12h10M4 15h10" stroke="#888"/><rect x="12" y="10" width="9" height="9" fill="#aaa"/></svg><svg style="left:72px;top:114px" width="22" height="22"><rect x="5" y="2" width="12" height="10" fill="#ddd" stroke="#888"/><circle cx="12" cy="14" r="5" fill="#ddd" stroke="#888" stroke-width="2"/><path d="M1 14l4-4v8z" fill="#888"/><path d="M15 17l4 4" stroke="#888" stroke-width="2"/></svg><svg style="left:100px;top:114px" width="22" height="22"><rect x="5" y="2" width="12" height="10" fill="#ddd" stroke="#888"/><circle cx="12" cy="14" r="5" fill="#ddd" stroke="#888" stroke-width="2"/><path d="M1 10l4 4-4 4z" fill="#888"/><path d="M15 17l4 4" stroke="#888" stroke-width="2"/></svg><svg style="left:128px;top:114px" width="22" height="22"><path d="M1 7h5l-2-2M1 7l3 2" stroke="#888" stroke-width="2"/><path d="M8 4v16M11 4v16" stroke="#bbb"/><path d="M13 7h7M13 13h7M13 19h7" stroke="#aaa" stroke-width="1.5"/></svg><svg style="left:156px;top:114px" width="22" height="22"><path d="M7 7H2l2-2M2 7l2 2" stroke="#888" stroke-width="2"/><path d="M8 10v10M11 10v10" stroke="#bbb"/><path d="M9 4h11M13 12h7M13 18h7" stroke="#aaa" stroke-width="1.5"/></svg><div style="left:184px;top:110px;width:13px;height:30px;background:#d3dbe8"></div><svg style="left:187px;top:127px" width="9" height="7"><rect x="0" y="0" width="8" height="1.5" fill="#222"/><path d="M0 2.5h8l-4 4z" fill="#222"/></svg><div style="left:0px;top:142px;width:437px;height:28px;background:linear-gradient(#fef7de,#f9e3a2);border-radius:3px 3px 0 0"></div><div class="t" style="left:6px;top:148px;font-size:15px;color:#111">导航</div><div style="left:0px;top:170px;width:437px;height:2px;background:#8c8c8c"></div><div style="left:3px;top:172px;width:433px;height:35px;background:#bac6d9;border-bottom:1px solid #6e9ad3"></div><div style="left:0px;top:172px;width:3px;height:700px;background:#a0a0a0"></div><div style="left:2px;top:208px;width:1px;height:661px;background:#6a9ad8"></div><div style="left:3px;top:208px;width:410px;height:661px;background:#35486a"></div><div style="left:413px;top:208px;width:23px;height:661px;background:#f0f0f0;border:1px solid #b8c8e0"></div><div style="left:3px;top:868px;width:433px;height:4px;background:#fff;border-top:1px solid #8fb0e0"></div><div style="left:3px;top:208px;width:410px;height:660px;overflow:hidden"><svg style="left:57px;top:7px" width="11" height="11"><defs><linearGradient id="eg" x1="0" y1="0" x2="0" y2="1"><stop offset="0" stop-color="#fafafa"/><stop offset="1" stop-color="#d6d6d6"/></linearGradient></defs><rect x=".5" y=".5" width="10" height="10" fill="url(#eg)" stroke="#a8a8a8"/><path d="M2.5 5.5h6" stroke="#2838a0"/><path d="M5.5 2.5v6" stroke="#2838a0"/></svg><svg style="left:76px;top:4px" width="17" height="16"><path d="M1.5 6.5h3v8h-3z" fill="#f0c840" stroke="#8a6a10"/><path d="M4.5 1.5h8l2 2v11h-10z" fill="#fff" stroke="#999"/><rect x="5" y="8" width="2" height="1.6" fill="#e02020"/><rect x="7" y="5" width="1.8" height="7" fill="#e02020"/><rect x="10" y="5" width="1.8" height="7" fill="#e02020"/><rect x="11.8" y="8" width="2" height="1.6" fill="#e02020"/></svg><div class="t" style="left:97px;top:2px;color:#fff;letter-spacing:.4px;transform:scaleX(1.0);transform-origin:0 0">System1</div><svg style="left:57px;top:32px" width="11" height="11"><defs><linearGradient id="eg" x1="0" y1="0" x2="0" y2="1"><stop offset="0" stop-color="#fafafa"/><stop offset="1" stop-color="#d6d6d6"/></linearGradient></defs><rect x=".5" y=".5" width="10" height="10" fill="url(#eg)" stroke="#a8a8a8"/><path d="M2.5 5.5h6" stroke="#2838a0"/></svg><svg style="left:76px;top:29px" width="17" height="16"><path d="M1.5 6.5h3v8h-3z" fill="#f0c840" stroke="#8a6a10"/><path d="M4.5 1.5h8l2 2v11h-10z" fill="#fff" stroke="#999"/><rect x="5" y="8" width="2" height="1.6" fill="#e02020"/><rect x="7" y="5" width="1.8" height="7" fill="#e02020"/><rect x="10" y="5" width="1.8" height="7" fill="#e02020"/><rect x="11.8" y="8" width="2" height="1.6" fill="#e02020"/></svg><div class="t" style="left:97px;top:27px;color:#fff;letter-spacing:.4px;transform:scaleX(1.025);transform-origin:0 0">Mater_Clear</div><svg style="left:94px;top:54px" width="17" height="16"><path d="M2 3h7l2 2v8H2z" fill="#ddeeff" stroke="#6080c0"/><rect x="6" y="7" width="9" height="7" fill="#3060d0" stroke="#203080"/><path d="M6 9.5h9M6 12h9M10 7v7" stroke="#fff" stroke-width=".8"/></svg><div class="t" style="left:115px;top:52px;color:#fff;letter-spacing:.4px;transform:scaleX(0.975);transform-origin:0 0">局部标签</div><svg style="left:94px;top:79px" width="17" height="16"><path d="M3.5 1.5h7l3 3v10h-10z" fill="#fff" stroke="#999"/><rect x="4" y="8" width="2" height="1.6" fill="#e02020"/><rect x="6" y="5" width="1.8" height="7" fill="#e02020"/><rect x="9" y="5" width="1.8" height="7" fill="#e02020"/><rect x="10.8" y="8" width="2" height="1.6" fill="#e02020"/></svg><div class="t" style="left:115px;top:77px;color:#fff;letter-spacing:.4px;transform:scaleX(0.975);transform-origin:0 0">程序本体</div><svg style="left:40px;top:104px" width="17" height="16"><rect x="1.5" y="4.5" width="14" height="10" fill="#f3c64a" stroke="#8a6a10"/><rect x="5" y="2" width="3" height="12" fill="#fff" stroke="#777" stroke-width=".8"/><rect x="9" y="2" width="3" height="12" fill="#e03030" stroke="#777" stroke-width=".8"/></svg><div class="t" style="left:61px;top:102px;color:#fff;letter-spacing:.4px;transform:scaleX(0.96);transform-origin:0 0">恒定周期</div><svg style="left:40px;top:129px" width="17" height="16"><rect x="1.5" y="4.5" width="14" height="10" fill="#f3c64a" stroke="#8a6a10"/><rect x="5" y="2" width="3" height="12" fill="#fff" stroke="#777" stroke-width=".8"/><rect x="9" y="2" width="3" height="12" fill="#e03030" stroke="#777" stroke-width=".8"/></svg><div class="t" style="left:61px;top:127px;color:#fff;letter-spacing:.4px;transform:scaleX(1.0);transform-origin:0 0">事件</div><svg style="left:40px;top:154px" width="17" height="16"><rect x="1.5" y="4.5" width="14" height="10" fill="#f3c64a" stroke="#8a6a10"/><rect x="5" y="2" width="3" height="12" fill="#fff" stroke="#777" stroke-width=".8"/><rect x="9" y="2" width="3" height="12" fill="#e03030" stroke="#777" stroke-width=".8"/></svg><div class="t" style="left:61px;top:152px;color:#fff;letter-spacing:.4px;transform:scaleX(1.0);transform-origin:0 0">待机</div><svg style="left:40px;top:179px" width="17" height="16"><rect x="1.5" y="4.5" width="14" height="10" fill="#f3c64a" stroke="#8a6a10"/><rect x="5" y="2" width="3" height="12" fill="#fff" stroke="#777" stroke-width=".8"/><rect x="9" y="2" width="3" height="12" fill="#e03030" stroke="#777" stroke-width=".8"/></svg><div class="t" style="left:61px;top:177px;color:#fff;letter-spacing:.4px;transform:scaleX(0.97);transform-origin:0 0">无执行类型指定</div><svg style="left:40px;top:204px" width="17" height="16"><rect x="1.5" y="4.5" width="14" height="10" fill="#f3c64a" stroke="#8a6a10"/><path d="M4 2h8v12H4z" fill="#f4f4f4" stroke="#777" stroke-width=".8"/></svg><div class="t" style="left:61px;top:202px;color:#fff;letter-spacing:.4px;transform:scaleX(1.0);transform-origin:0 0">未登录程序</div><svg style="left:3px;top:232px" width="11" height="11"><defs><linearGradient id="eg" x1="0" y1="0" x2="0" y2="1"><stop offset="0" stop-color="#fafafa"/><stop offset="1" stop-color="#d6d6d6"/></linearGradient></defs><rect x=".5" y=".5" width="10" height="10" fill="url(#eg)" stroke="#a8a8a8"/><path d="M2.5 5.5h6" stroke="#2838a0"/></svg><svg style="left:22px;top:229px" width="17" height="16"><path d="M1.5 4.5q0-1 1-1h3l1.5 1.5h6.5q1 0 1 1v8.5q0 1-1 1h-11q-1 0-1-1z" fill="#fbe9a0" stroke="#c89018" stroke-width="1.3"/><rect x="5" y="1" width="8" height="5" fill="#6a80f0"/><rect x="12" y="2" width="4" height="2" fill="#6a80f0"/><rect x="3" y="3" width="3" height="2" fill="#6a80f0"/><path d="M2 9h4v1.5H2zM2 12h4v1.5H2z" fill="#6cc060"/><rect x="5" y="6" width="8" height="8.5" fill="#3c9a3c"/><rect x="6" y="7" width="3" height="6" fill="#58b858"/><rect x="12" y="6.5" width="4" height="2" fill="#3c9a3c"/></svg><div class="t" style="left:43px;top:227px;color:#fff;letter-spacing:.4px;transform:scaleX(0.97);transform-origin:0 0">FB/FUN</div><svg style="left:21px;top:257px" width="11" height="11"><defs><linearGradient id="eg" x1="0" y1="0" x2="0" y2="1"><stop offset="0" stop-color="#fafafa"/><stop offset="1" stop-color="#d6d6d6"/></linearGradient></defs><rect x=".5" y=".5" width="10" height="10" fill="url(#eg)" stroke="#a8a8a8"/><path d="M2.5 5.5h6" stroke="#2838a0"/></svg><svg style="left:40px;top:255px" width="17" height="16"><path d="M1.5 3.5q0-1 1-1h3l1.5 1.5h6.5q1 0 1 1v9q0 1-1 1h-11q-1 0-1-1z" fill="#fbe9a0" stroke="#c89018" stroke-width="1.3"/><path d="M2 7h4v1.5H2zM2 10h4v1.5H2z" fill="#6cc060"/><rect x="5" y="5" width="8" height="8.5" fill="#3c9a3c"/><rect x="6" y="6" width="3" height="6" fill="#58b858"/><rect x="12" y="5.5" width="4" height="2" fill="#3c9a3c"/></svg><div class="t" style="left:61px;top:252px;color:#fff;letter-spacing:.4px;transform:scaleX(0.865);transform-origin:0 0">FBFILE</div><svg style="left:39px;top:282px" width="11" height="11"><defs><linearGradient id="eg" x1="0" y1="0" x2="0" y2="1"><stop offset="0" stop-color="#fafafa"/><stop offset="1" stop-color="#d6d6d6"/></linearGradient></defs><rect x=".5" y=".5" width="10" height="10" fill="url(#eg)" stroke="#a8a8a8"/><path d="M2.5 5.5h6" stroke="#2838a0"/><path d="M5.5 2.5v6" stroke="#2838a0"/></svg><svg style="left:58px;top:280px" width="17" height="16"><path d="M1.5 3.5q0-1 1-1h3l1.5 1.5h6.5q1 0 1 1v9q0 1-1 1h-11q-1 0-1-1z" fill="#fbe9a0" stroke="#c89018" stroke-width="1.3"/><path d="M2 7h4v1.5H2zM2 10h4v1.5H2z" fill="#6cc060"/><rect x="5" y="5" width="8" height="8.5" fill="#3c9a3c"/><rect x="6" y="6" width="3" height="6" fill="#58b858"/><rect x="12" y="5.5" width="4" height="2" fill="#3c9a3c"/></svg><div class="t" style="left:79px;top:277px;color:#fff;letter-spacing:.4px;transform:scaleX(0.916);transform-origin:0 0">DOG_LSP_LSN</div><div style="left:0;top:300px;width:398px;height:24px;background:#fff29e"></div><svg style="left:39px;top:307px" width="11" height="11"><defs><linearGradient id="eg" x1="0" y1="0" x2="0" y2="1"><stop offset="0" stop-color="#fafafa"/><stop offset="1" stop-color="#d6d6d6"/></linearGradient></defs><rect x=".5" y=".5" width="10" height="10" fill="url(#eg)" stroke="#a8a8a8"/><path d="M2.5 5.5h6" stroke="#2838a0"/><path d="M5.5 2.5v6" stroke="#2838a0"/></svg><svg style="left:58px;top:305px" width="17" height="16"><path d="M1.5 3.5q0-1 1-1h3l1.5 1.5h6.5q1 0 1 1v9q0 1-1 1h-11q-1 0-1-1z" fill="#fbe9a0" stroke="#c89018" stroke-width="1.3"/><path d="M2 7h4v1.5H2zM2 10h4v1.5H2z" fill="#6cc060"/><rect x="5" y="5" width="8" height="8.5" fill="#3c9a3c"/><rect x="6" y="6" width="3" height="6" fill="#58b858"/><rect x="12" y="5.5" width="4" height="2" fill="#3c9a3c"/></svg><div class="t" style="left:79px;top:302px;color:#111;letter-spacing:.4px;transform:scaleX(0.935);transform-origin:0 0">JEC_HOME</div><svg style="left:39px;top:332px" width="11" height="11"><defs><linearGradient id="eg" x1="0" y1="0" x2="0" y2="1"><stop offset="0" stop-color="#fafafa"/><stop offset="1" stop-color="#d6d6d6"/></linearGradient></defs><rect x=".5" y=".5" width="10" height="10" fill="url(#eg)" stroke="#a8a8a8"/><path d="M2.5 5.5h6" stroke="#2838a0"/><path d="M5.5 2.5v6" stroke="#2838a0"/></svg><svg style="left:58px;top:330px" width="17" height="16"><path d="M1.5 3.5q0-1 1-1h3l1.5 1.5h6.5q1 0 1 1v9q0 1-1 1h-11q-1 0-1-1z" fill="#fbe9a0" stroke="#c89018" stroke-width="1.3"/><path d="M2 7h4v1.5H2zM2 10h4v1.5H2z" fill="#6cc060"/><rect x="5" y="5" width="8" height="8.5" fill="#3c9a3c"/><rect x="6" y="6" width="3" height="6" fill="#58b858"/><rect x="12" y="5.5" width="4" height="2" fill="#3c9a3c"/></svg><div class="t" style="left:79px;top:327px;color:#fff;letter-spacing:.4px;transform:scaleX(0.884);transform-origin:0 0">JEC_PPABS</div><svg style="left:39px;top:357px" width="11" height="11"><defs><linearGradient id="eg" x1="0" y1="0" x2="0" y2="1"><stop offset="0" stop-color="#fafafa"/><stop offset="1" stop-color="#d6d6d6"/></linearGradient></defs><rect x=".5" y=".5" width="10" height="10" fill="url(#eg)" stroke="#a8a8a8"/><path d="M2.5 5.5h6" stroke="#2838a0"/><path d="M5.5 2.5v6" stroke="#2838a0"/></svg><svg style="left:58px;top:355px" width="17" height="16"><path d="M1.5 3.5q0-1 1-1h3l1.5 1.5h6.5q1 0 1 1v9q0 1-1 1h-11q-1 0-1-1z" fill="#fbe9a0" stroke="#c89018" stroke-width="1.3"/><path d="M2 7h4v1.5H2zM2 10h4v1.5H2z" fill="#6cc060"/><rect x="5" y="5" width="8" height="8.5" fill="#3c9a3c"/><rect x="6" y="6" width="3" height="6" fill="#58b858"/><rect x="12" y="5.5" width="4" height="2" fill="#3c9a3c"/></svg><div class="t" style="left:79px;top:352px;color:#fff;letter-spacing:.4px;transform:scaleX(0.88);transform-origin:0 0">JEC_PPINC</div><svg style="left:39px;top:382px" width="11" height="11"><defs><linearGradient id="eg" x1="0" y1="0" x2="0" y2="1"><stop offset="0" stop-color="#fafafa"/><stop offset="1" stop-color="#d6d6d6"/></linearGradient></defs><rect x=".5" y=".5" width="10" height="10" fill="url(#eg)" stroke="#a8a8a8"/><path d="M2.5 5.5h6" stroke="#2838a0"/><path d="M5.5 2.5v6" stroke="#2838a0"/></svg><svg style="left:58px;top:380px" width="17" height="16"><path d="M1.5 3.5q0-1 1-1h3l1.5 1.5h6.5q1 0 1 1v9q0 1-1 1h-11q-1 0-1-1z" fill="#fbe9a0" stroke="#c89018" stroke-width="1.3"/><path d="M2 7h4v1.5H2zM2 10h4v1.5H2z" fill="#6cc060"/><rect x="5" y="5" width="8" height="8.5" fill="#3c9a3c"/><rect x="6" y="6" width="3" height="6" fill="#58b858"/><rect x="12" y="5.5" width="4" height="2" fill="#3c9a3c"/></svg><div class="t" style="left:79px;top:377px;color:#fff;letter-spacing:.4px;transform:scaleX(0.868);transform-origin:0 0">JEC_PV</div><svg style="left:39px;top:407px" width="11" height="11"><defs><linearGradient id="eg" x1="0" y1="0" x2="0" y2="1"><stop offset="0" stop-color="#fafafa"/><stop offset="1" stop-color="#d6d6d6"/></linearGradient></defs><rect x=".5" y=".5" width="10" height="10" fill="url(#eg)" stroke="#a8a8a8"/><path d="M2.5 5.5h6" stroke="#2838a0"/><path d="M5.5 2.5v6" stroke="#2838a0"/></svg><svg style="left:58px;top:405px" width="17" height="16"><path d="M1.5 3.5q0-1 1-1h3l1.5 1.5h6.5q1 0 1 1v9q0 1-1 1h-11q-1 0-1-1z" fill="#fbe9a0" stroke="#c89018" stroke-width="1.3"/><path d="M2 7h4v1.5H2zM2 10h4v1.5H2z" fill="#6cc060"/><rect x="5" y="5" width="8" height="8.5" fill="#3c9a3c"/><rect x="6" y="6" width="3" height="6" fill="#58b858"/><rect x="12" y="5.5" width="4" height="2" fill="#3c9a3c"/></svg><div class="t" style="left:79px;top:402px;color:#fff;letter-spacing:.4px;transform:scaleX(0.9);transform-origin:0 0">JEC_Tq</div><svg style="left:39px;top:432px" width="11" height="11"><defs><linearGradient id="eg" x1="0" y1="0" x2="0" y2="1"><stop offset="0" stop-color="#fafafa"/><stop offset="1" stop-color="#d6d6d6"/></linearGradient></defs><rect x=".5" y=".5" width="10" height="10" fill="url(#eg)" stroke="#a8a8a8"/><path d="M2.5 5.5h6" stroke="#2838a0"/><path d="M5.5 2.5v6" stroke="#2838a0"/></svg><svg style="left:58px;top:430px" width="17" height="16"><path d="M1.5 3.5q0-1 1-1h3l1.5 1.5h6.5q1 0 1 1v9q0 1-1 1h-11q-1 0-1-1z" fill="#fbe9a0" stroke="#c89018" stroke-width="1.3"/><path d="M2 7h4v1.5H2zM2 10h4v1.5H2z" fill="#6cc060"/><rect x="5" y="5" width="8" height="8.5" fill="#3c9a3c"/><rect x="6" y="6" width="3" height="6" fill="#58b858"/><rect x="12" y="5.5" width="4" height="2" fill="#3c9a3c"/></svg><div class="t" style="left:79px;top:427px;color:#fff;letter-spacing:.4px;transform:scaleX(0.937);transform-origin:0 0">JECInt</div><svg style="left:39px;top:457px" width="11" height="11"><defs><linearGradient id="eg" x1="0" y1="0" x2="0" y2="1"><stop offset="0" stop-color="#fafafa"/><stop offset="1" stop-color="#d6d6d6"/></linearGradient></defs><rect x=".5" y=".5" width="10" height="10" fill="url(#eg)" stroke="#a8a8a8"/><path d="M2.5 5.5h6" stroke="#2838a0"/><path d="M5.5 2.5v6" stroke="#2838a0"/></svg><svg style="left:58px;top:455px" width="17" height="16"><path d="M1.5 3.5q0-1 1-1h3l1.5 1.5h6.5q1 0 1 1v9q0 1-1 1h-11q-1 0-1-1z" fill="#fbe9a0" stroke="#c89018" stroke-width="1.3"/><path d="M2 7h4v1.5H2zM2 10h4v1.5H2z" fill="#6cc060"/><rect x="5" y="5" width="8" height="8.5" fill="#3c9a3c"/><rect x="6" y="6" width="3" height="6" fill="#58b858"/><rect x="12" y="5.5" width="4" height="2" fill="#3c9a3c"/></svg><div class="t" style="left:79px;top:452px;color:#fff;letter-spacing:.4px;transform:scaleX(1.02);transform-origin:0 0">JetPdoChage</div><svg style="left:21px;top:482px" width="11" height="11"><defs><linearGradient id="eg" x1="0" y1="0" x2="0" y2="1"><stop offset="0" stop-color="#fafafa"/><stop offset="1" stop-color="#d6d6d6"/></linearGradient></defs><rect x=".5" y=".5" width="10" height="10" fill="url(#eg)" stroke="#a8a8a8"/><path d="M2.5 5.5h6" stroke="#2838a0"/><path d="M5.5 2.5v6" stroke="#2838a0"/></svg><svg style="left:40px;top:480px" width="17" height="16"><path d="M1.5 3.5q0-1 1-1h3l1.5 1.5h6.5q1 0 1 1v9q0 1-1 1h-11q-1 0-1-1z" fill="#fbe9a0" stroke="#c89018" stroke-width="1.3"/><path d="M2 7h4v1.5H2zM2 10h4v1.5H2z" fill="#6cc060"/><rect x="5" y="5" width="8" height="8.5" fill="#3c9a3c"/><rect x="6" y="6" width="3" height="6" fill="#58b858"/><rect x="12" y="5.5" width="4" height="2" fill="#3c9a3c"/></svg><div class="t" style="left:61px;top:477px;color:#fff;letter-spacing:.4px;transform:scaleX(1.027);transform-origin:0 0">Unit_Conversion</div><svg style="left:21px;top:507px" width="11" height="11"><defs><linearGradient id="eg" x1="0" y1="0" x2="0" y2="1"><stop offset="0" stop-color="#fafafa"/><stop offset="1" stop-color="#d6d6d6"/></linearGradient></defs><rect x=".5" y=".5" width="10" height="10" fill="url(#eg)" stroke="#a8a8a8"/><path d="M2.5 5.5h6" stroke="#2838a0"/><path d="M5.5 2.5v6" stroke="#2838a0"/></svg><svg style="left:40px;top:505px" width="17" height="16"><path d="M1.5 3.5q0-1 1-1h3l1.5 1.5h6.5q1 0 1 1v9q0 1-1 1h-11q-1 0-1-1z" fill="#fbe9a0" stroke="#c89018" stroke-width="1.3"/><path d="M2 7h4v1.5H2zM2 10h4v1.5H2z" fill="#6cc060"/><rect x="5" y="5" width="8" height="8.5" fill="#3c9a3c"/><rect x="6" y="6" width="3" height="6" fill="#58b858"/><rect x="12" y="5.5" width="4" height="2" fill="#3c9a3c"/></svg><div class="t" style="left:61px;top:502px;color:#fff;letter-spacing:.4px;transform:scaleX(1.03);transform-origin:0 0">System</div><svg style="left:21px;top:532px" width="11" height="11"><defs><linearGradient id="eg" x1="0" y1="0" x2="0" y2="1"><stop offset="0" stop-color="#fafafa"/><stop offset="1" stop-color="#d6d6d6"/></linearGradient></defs><rect x=".5" y=".5" width="10" height="10" fill="url(#eg)" stroke="#a8a8a8"/><path d="M2.5 5.5h6" stroke="#2838a0"/></svg><svg style="left:40px;top:530px" width="17" height="16"><path d="M1.5 3.5q0-1 1-1h3l1.5 1.5h6.5q1 0 1 1v9q0 1-1 1h-11q-1 0-1-1z" fill="#fbe9a0" stroke="#c89018" stroke-width="1.3"/><path d="M2 7h4v1.5H2zM2 10h4v1.5H2z" fill="#6cc060"/><rect x="5" y="5" width="8" height="8.5" fill="#3c9a3c"/><rect x="6" y="6" width="3" height="6" fill="#58b858"/><rect x="12" y="5.5" width="4" height="2" fill="#3c9a3c"/></svg><div class="t" style="left:61px;top:527px;color:#fff;letter-spacing:.4px;transform:scaleX(0.91);transform-origin:0 0">Cyl_FB</div><svg style="left:39px;top:557px" width="11" height="11"><defs><linearGradient id="eg" x1="0" y1="0" x2="0" y2="1"><stop offset="0" stop-color="#fafafa"/><stop offset="1" stop-color="#d6d6d6"/></linearGradient></defs><rect x=".5" y=".5" width="10" height="10" fill="url(#eg)" stroke="#a8a8a8"/><path d="M2.5 5.5h6" stroke="#2838a0"/><path d="M5.5 2.5v6" stroke="#2838a0"/></svg><svg style="left:58px;top:555px" width="17" height="16"><path d="M1.5 3.5q0-1 1-1h3l1.5 1.5h6.5q1 0 1 1v9q0 1-1 1h-11q-1 0-1-1z" fill="#fbe9a0" stroke="#c89018" stroke-width="1.3"/><path d="M2 7h4v1.5H2zM2 10h4v1.5H2z" fill="#6cc060"/><rect x="5" y="5" width="8" height="8.5" fill="#3c9a3c"/><rect x="6" y="6" width="3" height="6" fill="#58b858"/><rect x="12" y="5.5" width="4" height="2" fill="#3c9a3c"/></svg><div class="t" style="left:79px;top:552px;color:#fff;letter-spacing:.4px;transform:scaleX(0.91);transform-origin:0 0">Cyl_FB</div><svg style="left:21px;top:582px" width="11" height="11"><defs><linearGradient id="eg" x1="0" y1="0" x2="0" y2="1"><stop offset="0" stop-color="#fafafa"/><stop offset="1" stop-color="#d6d6d6"/></linearGradient></defs><rect x=".5" y=".5" width="10" height="10" fill="url(#eg)" stroke="#a8a8a8"/><path d="M2.5 5.5h6" stroke="#2838a0"/><path d="M5.5 2.5v6" stroke="#2838a0"/></svg><svg style="left:40px;top:580px" width="17" height="16"><path d="M1.5 3.5q0-1 1-1h3l1.5 1.5h6.5q1 0 1 1v9q0 1-1 1h-11q-1 0-1-1z" fill="#fbe9a0" stroke="#c89018" stroke-width="1.3"/><path d="M2 7h4v1.5H2zM2 10h4v1.5H2z" fill="#6cc060"/><rect x="5" y="5" width="8" height="8.5" fill="#3c9a3c"/><rect x="6" y="6" width="3" height="6" fill="#58b858"/><rect x="12" y="5.5" width="4" height="2" fill="#3c9a3c"/></svg><div class="t" style="left:61px;top:577px;color:#fff;letter-spacing:.4px;transform:scaleX(1.05);transform-origin:0 0">Motor_FB</div><svg style="left:21px;top:607px" width="11" height="11"><defs><linearGradient id="eg" x1="0" y1="0" x2="0" y2="1"><stop offset="0" stop-color="#fafafa"/><stop offset="1" stop-color="#d6d6d6"/></linearGradient></defs><rect x=".5" y=".5" width="10" height="10" fill="url(#eg)" stroke="#a8a8a8"/><path d="M2.5 5.5h6" stroke="#2838a0"/><path d="M5.5 2.5v6" stroke="#2838a0"/></svg><svg style="left:40px;top:605px" width="17" height="16"><path d="M1.5 3.5q0-1 1-1h3l1.5 1.5h6.5q1 0 1 1v9q0 1-1 1h-11q-1 0-1-1z" fill="#fbe9a0" stroke="#c89018" stroke-width="1.3"/><path d="M2 7h4v1.5H2zM2 10h4v1.5H2z" fill="#6cc060"/><rect x="5" y="5" width="8" height="8.5" fill="#3c9a3c"/><rect x="6" y="6" width="3" height="6" fill="#58b858"/><rect x="12" y="5.5" width="4" height="2" fill="#3c9a3c"/></svg><div class="t" style="left:61px;top:602px;color:#fff;letter-spacing:.4px;transform:scaleX(0.975);transform-origin:0 0">生产数据</div><svg style="left:3px;top:632px" width="11" height="11"><defs><linearGradient id="eg" x1="0" y1="0" x2="0" y2="1"><stop offset="0" stop-color="#fafafa"/><stop offset="1" stop-color="#d6d6d6"/></linearGradient></defs><rect x=".5" y=".5" width="10" height="10" fill="url(#eg)" stroke="#a8a8a8"/><path d="M2.5 5.5h6" stroke="#2838a0"/><path d="M5.5 2.5v6" stroke="#2838a0"/></svg><svg style="left:22px;top:629px" width="17" height="16"><path d="M1.5 4.5q0-1 1-1h3l1 1h7v10h-12z" fill="#f6d060" stroke="#b08010"/><circle cx="8" cy="5" r="4.5" fill="#40a040"/><path d="M4 4a4.5 4.5 0 0 1 8 0z" fill="#50a0e0"/><rect x="5.5" y="6.5" width="9" height="8" fill="#fff" stroke="#3040e0"/><path d="M6 9h8M6 11.5h8M9 7v7" stroke="#3040e0"/></svg><div class="t" style="left:43px;top:627px;color:#fff;letter-spacing:.4px;transform:scaleX(1.0);transform-origin:0 0">标签</div><svg style="left:3px;top:657px" width="11" height="11"><defs><linearGradient id="eg" x1="0" y1="0" x2="0" y2="1"><stop offset="0" stop-color="#fafafa"/><stop offset="1" stop-color="#d6d6d6"/></linearGradient></defs><rect x=".5" y=".5" width="10" height="10" fill="url(#eg)" stroke="#a8a8a8"/><path d="M2.5 5.5h6" stroke="#2838a0"/></svg><svg style="left:22px;top:654px" width="17" height="16"><rect x="1.5" y="6.5" width="14" height="8" fill="#f0c840" stroke="#a07010"/><circle cx="5" cy="7" r="3.5" fill="#f070a0"/><rect x="9" y="2" width="7" height="8" fill="#70c060" stroke="#e0b020"/></svg><div class="t" style="left:43px;top:652px;color:#fff;letter-spacing:.4px;transform:scaleX(1.0);transform-origin:0 0">软元件</div></div><div style="left:0px;top:872px;width:437px;height:32px;background:#2e3f5e"></div><div style="left:96px;top:872px;width:65px;height:25px;background:#fff;border-radius:0 0 2px 2px"></div><div class="t" style="left:30px;top:875px;color:#fff">连接目标</div><div class="t" style="left:126px;top:875px;color:#111">导航</div><div style="left:0px;top:904px;width:437px;height:28px;background:linear-gradient(#4c5f84,#3d4f73);border-radius:3px 3px 0 0"></div><div class="t" style="left:5px;top:909px;color:#fff">快速搜索</div><svg style="left:397px;top:149px" width="36" height="14"><path d="M3 1.5h7M4.5 1.5v7M8.5 1.5v7M2.5 8.5h8M6.5 8.5v5" stroke="#3a3520" stroke-width="1.4" fill="none"/><path d="M24 2.5l8 8M32 2.5l-8 8" stroke="#3a3520" stroke-width="1.6"/></svg><svg style="left:12px;top:180px" width="30" height="18"><rect x=".5" y=".5" width="6" height="6" fill="#fff" stroke="#202840"/><path d="M2 3.5h3" stroke="#202840"/><path d="M8 3.5h2.5v12.5H15" stroke="#202840" fill="none"/><path d="M11 6.5l2-3 2 3zM11 12.5l2 3 2-3z" fill="#e82020"/><path d="M13 6v7M11 9.5h4" stroke="#e82020"/><path d="M19.5 8.5h6l-3 3z" fill="#202840"/></svg><div style="left:47px;top:178px;width:1px;height:24px;background:#8d9bb2;box-shadow:1px 0 0 #e4eaf3"></div><svg style="left:58px;top:180px" width="18" height="14"><rect x=".5" y=".5" width="6" height="6" fill="#fff" stroke="#202840"/><path d="M2 3.5h3" stroke="#202840"/><path d="M15 3.5H8.5v6H15" stroke="#202840" fill="none"/></svg><div style="left:83px;top:178px;width:1px;height:24px;background:#8d9bb2;box-shadow:1px 0 0 #e4eaf3"></div><svg style="left:92px;top:180px" width="20" height="20"><g transform="translate(10,10)"><circle r="6" fill="#333"/><rect x="-1.8" y="-9" width="3.6" height="5" fill="#333" transform="rotate(0)"/><rect x="-1.8" y="-9" width="3.6" height="5" fill="#333" transform="rotate(45)"/><rect x="-1.8" y="-9" width="3.6" height="5" fill="#333" transform="rotate(90)"/><rect x="-1.8" y="-9" width="3.6" height="5" fill="#333" transform="rotate(135)"/><rect x="-1.8" y="-9" width="3.6" height="5" fill="#333" transform="rotate(180)"/><rect x="-1.8" y="-9" width="3.6" height="5" fill="#333" transform="rotate(225)"/><rect x="-1.8" y="-9" width="3.6" height="5" fill="#333" transform="rotate(270)"/><rect x="-1.8" y="-9" width="3.6" height="5" fill="#333" transform="rotate(315)"/><circle r="2.5" fill="#bac6d9"/></g></svg><div style="left:119px;top:178px;width:1px;height:24px;background:#8d9bb2;box-shadow:1px 0 0 #e4eaf3"></div><div style="left:124px;top:176px;width:99px;height:28px;background:#fff;border:1px solid #7f8fa8"></div><div style="left:206px;top:177px;width:16px;height:26px;background:#c1cbdd"></div><svg style="left:210px;top:188px" width="9" height="5"><path d="M0 0h9l-4.5 5z" fill="#233050"/></svg><div class="t" style="left:128px;top:180px">全部</div><svg style="left:417px;top:212px" width="14" height="10"><path d="M2 7.5l5-5 5 5" stroke="#555" stroke-width="1.8" fill="none"/></svg><div style="left:415px;top:620px;width:19px;height:213px;background:#c2c2c2"></div><svg style="left:417px;top:851px" width="14" height="10"><path d="M2 2.5l5 5 5-5" stroke="#555" stroke-width="1.8" fill="none"/></svg><svg style="left:8px;top:876px" width="20" height="20"><rect x="1.5" y="4.5" width="11" height="13" fill="none" stroke="#30a030" stroke-width="1.2"/><rect x="6" y="1" width="9" height="7" fill="#ccc" stroke="#333"/><rect x="4" y="8" width="10" height="6" fill="#222"/><rect x="12" y="6" width="7" height="13" fill="#333"/><rect x="4" y="14" width="10" height="4" fill="#f4f4f4"/></svg><svg style="left:103px;top:876px" width="18" height="18"><rect x="1" y="1" width="6" height="5" fill="#f0b020" stroke="#806010" stroke-width=".6"/><path d="M4 6v9h5M4 10h5" stroke="#eee" fill="none"/><rect x="9" y="7" width="6" height="5" fill="#f0b020" stroke="#806010" stroke-width=".6"/><rect x="9" y="13" width="6" height="5" fill="#f0b020" stroke="#806010" stroke-width=".6"/></svg><svg style="left:396px;top:911px" width="36" height="14"><path d="M3 1.5h7M4.5 1.5v7M8.5 1.5v7M2.5 8.5h8M6.5 8.5v5" stroke="#fff" stroke-width="1.4" fill="none"/><path d="M24 2.5l8 8M32 2.5l-8 8" stroke="#fff" stroke-width="1.6"/></svg><div style="left:2px;top:932px;width:434px;height:34px;background:#bcc8db;border-top:1px solid #d0d9e6"></div><div class="t" style="left:13px;top:939px;color:#222;font-size:15px">搜索对象: 全部(A)</div><svg style="left:136px;top:947px" width="7" height="4"><path d="M0 0h7l-3.5 4z" fill="#222"/></svg><div style="left:0px;top:966px;width:437px;height:15px;background:#f0f0f0;border:1px solid #888;border-bottom:1px solid #fff"></div><div style="left:437px;top:142px;width:1283px;height:838px;background:#2e3f5e"></div><div style="left:443px;top:170px;width:1271px;height:809px;background:#fde6a4"></div><div style="left:445px;top:174px;width:1266px;height:801px;background:#fff;border:2px solid #808080;border-right-color:#9a9a9a;border-bottom-color:#9a9a9a"></div><div style="left:447px;top:176px;width:27px;height:777px;background:#f0f0f0"></div><div style="left:1690px;top:176px;width:20px;height:777px;background:#f0f0f0"></div><div style="left:449px;top:953px;width:1261px;height:20px;background:#f0f0f0"></div><div class="t" style="left:444px;top:148px;color:#fff">(只读)...</div><svg style="left:505px;top:151px" width="12" height="12"><path d="M1 1L11 11M11 1L1 11" stroke="#3f4f70" stroke-width="1.6"/></svg><svg style="left:528px;top:148px" width="16" height="20"><path d="M.5 .5h11l3.5 3.5v14.5H.5z" fill="#fff" stroke="#666"/><rect x="1.5" y="9" width="3" height="2.2" fill="#e01818"/><rect x="4.5" y="5" width="2.4" height="10" fill="#e01818"/><rect x="8.5" y="5" width="2.4" height="10" fill="#e01818"/><rect x="10.9" y="9" width="3" height="2.2" fill="#e01818"/></svg><div class="t" style="left:549px;top:148px;color:#fff">Axis_Up [PRG] [LD] (只读) 65...</div><svg style="left:776px;top:151px" width="12" height="12"><path d="M1 1L11 11M11 1L1 11" stroke="#3f4f70" stroke-width="1.6"/></svg><svg style="left:803px;top:148px" width="16" height="20"><path d="M.5 .5h11l3.5 3.5v14.5H.5z" fill="#fff" stroke="#666"/><rect x="1.5" y="9" width="3" height="2.2" fill="#e01818"/><rect x="4.5" y="5" width="2.4" height="10" fill="#e01818"/><rect x="8.5" y="5" width="2.4" height="10" fill="#e01818"/><rect x="10.9" y="9" width="3" height="2.2" fill="#e01818"/></svg><div class="t" style="left:824px;top:148px;color:#fff">Axis_Down [PRG] [LD] (只读) ...</div><svg style="left:1054px;top:151px" width="12" height="12"><path d="M1 1L11 11M11 1L1 11" stroke="#3f4f70" stroke-width="1.6"/></svg><svg style="left:1078px;top:148px" width="16" height="20"><path d="M.5 .5h11l3.5 3.5v14.5H.5z" fill="#fff" stroke="#666"/><rect x="1.5" y="9" width="3" height="2.2" fill="#e01818"/><rect x="4.5" y="5" width="2.4" height="10" fill="#e01818"/><rect x="8.5" y="5" width="2.4" height="10" fill="#e01818"/><rect x="10.9" y="9" width="3" height="2.2" fill="#e01818"/></svg><div class="t" style="left:1099px;top:148px;color:#fff">Manual_Cyl [PRG] [LD] 3361步</div><svg style="left:1324px;top:151px" width="12" height="12"><path d="M1 1L11 11M11 1L1 11" stroke="#3f4f70" stroke-width="1.6"/></svg><svg style="left:1345px;top:147px" width="20" height="20"><path d="M.5 .5h15l3 3v15H.5z" fill="#fff" stroke="#444"/><text x="3" y="14.5" font-family="Liberation Sans" font-size="10" font-weight="bold" fill="#111">ST</text></svg><div class="t" style="left:1367px;top:148px;color:#fff">DOG_LSP_LSN [FB] [ST] (59)步</div><svg style="left:1588px;top:151px" width="12" height="12"><path d="M1 1L11 11M11 1L1 11" stroke="#3f4f70" stroke-width="1.6"/></svg><div style="left:1604px;top:142px;width:56px;height:30px;background:linear-gradient(#fefaf0 0,#fef3d0 45%,#fde6a4 55%,#fde6a4);border-radius:3px 3px 0 0;overflow:hidden"><svg style="left:7px;top:5px" width="20" height="20"><path d="M.5 .5h15l3 3v15H.5z" fill="#fff" stroke="#444"/><text x="3" y="14.5" font-family="Liberation Sans" font-size="10" font-weight="bold" fill="#111">ST</text></svg><div class="t" style="left:30px;top:5px;color:#111">JEC_HOME</div></div><svg style="left:1664px;top:146px" width="52" height="18"><path d="M9 2L2 8.5L9 15z" fill="#c9d3e3"/><path d="M21 2L28 8.5L21 15z" fill="#c9d3e3"/><rect x="35" y="1" width="14" height="3" fill="#c9d3e3"/><path d="M35 6h14l-7 8z" fill="#c9d3e3"/></svg><div style="left:449px;top:176px;width:1241px;height:777px;overflow:hidden"><div style="left:-449px;top:-176px;width:1920px;height:1011px"><div style="left:498px;top:176px;width:1px;height:777px;background:repeating-linear-gradient(#008000 0 1px,transparent 1px 2px)"></div><svg style="left:0;top:0" width="1920" height="1011"><rect x="503.5" y="222.5" width="10" height="10" fill="#fff" stroke="#808080"/><line x1="505.5" y1="227.5" x2="511.5" y2="227.5" stroke="#808080"/><rect x="503.5" y="342.5" width="10" height="10" fill="#fff" stroke="#808080"/><line x1="505.5" y1="347.5" x2="511.5" y2="347.5" stroke="#808080"/><rect x="503.5" y="522.5" width="10" height="10" fill="#fff" stroke="#808080"/><line x1="505.5" y1="527.5" x2="511.5" y2="527.5" stroke="#808080"/><rect x="503.5" y="562.5" width="10" height="10" fill="#fff" stroke="#808080"/><line x1="505.5" y1="567.5" x2="511.5" y2="567.5" stroke="#808080"/><rect x="503.5" y="682.5" width="10" height="10" fill="#fff" stroke="#808080"/><line x1="505.5" y1="687.5" x2="511.5" y2="687.5" stroke="#808080"/><line x1="508.5" y1="237" x2="508.5" y2="316" stroke="#808080"/><line x1="508" y1="315.5" x2="514" y2="315.5" stroke="#808080"/><line x1="508.5" y1="357" x2="508.5" y2="436" stroke="#808080"/><line x1="508" y1="435.5" x2="514" y2="435.5" stroke="#808080"/><line x1="508.5" y1="537" x2="508.5" y2="562" stroke="#808080"/><line x1="508.5" y1="573" x2="508.5" y2="682" stroke="#808080"/><line x1="508.5" y1="693" x2="508.5" y2="916" stroke="#808080"/><line x1="508" y1="655.5" x2="514" y2="655.5" stroke="#808080"/><line x1="508" y1="775.5" x2="514" y2="775.5" stroke="#808080"/><line x1="508" y1="915.5" x2="514" y2="915.5" stroke="#808080"/><line x1="551.5" y1="556" x2="551.5" y2="796" stroke="#e2e2e2"/><line x1="551.5" y1="876" x2="551.5" y2="896" stroke="#e2e2e2"/><line x1="587.5" y1="576" x2="587.5" y2="636" stroke="#e2e2e2"/><line x1="587.5" y1="656" x2="587.5" y2="676" stroke="#e2e2e2"/><line x1="587.5" y1="696" x2="587.5" y2="756" stroke="#e2e2e2"/><line x1="587.5" y1="776" x2="587.5" y2="796" stroke="#e2e2e2"/></svg><div class="cd" style="left:486px;top:176px"><div class="ca" style="color:#008000">1</div></div><div class="cd" style="left:486px;top:196px"><div class="ca" style="color:#008000">2</div></div><div class="cd" style="left:486px;top:216px"><div class="ca" style="color:#008000">3</div></div><div class="cd" style="left:515px;top:216px;width:1170px"><div class="ca" style="left:0.00px;color:#0000ff">IF </div><div class="cc" style="left:27.00px;color:#ff00ff;letter-spacing:1.00px">回原模式</div><div class="ca" style="left:99.00px;color:#ff00ff">EN</div><div class="ca" style="left:117.00px;color:#000000"> = </div><div class="ca" style="left:144.00px;color:#0000ff">TRUE THEN</div></div><div class="cd" style="left:486px;top:236px"><div class="ca" style="color:#008000">4</div></div><div class="cd" style="left:515px;top:236px;width:1170px"><div class="ca" style="left:36.00px;color:#008000">//</div><div class="cc" style="left:54.00px;color:#008000;letter-spacing:1.00px">控制模式</div></div><div class="cd" style="left:486px;top:256px"><div class="ca" style="color:#008000">5</div></div><div class="cd" style="left:515px;top:256px;width:1170px"><div class="cc" style="left:36.00px;color:#ff00ff;letter-spacing:1.00px">控制模式</div><div class="ca" style="left:108.00px;color:#000000"> := HO6;</div></div><div class="cd" style="left:486px;top:276px"><div class="ca" style="color:#008000">6</div></div><div class="cd" style="left:515px;top:276px;width:1170px"><div class="ca" style="left:36.00px;color:#ff00ff">JEC.RWw</div><div class="ca" style="left:99.00px;color:#000000">[</div><div class="cs" style="left:108.00px;color:#ff00ff;letter-spacing:0.25px">轴号</div><div class="ca" style="left:137.50px;color:#000000"><span style="display:inline-block;transform:translateY(6.5px) scale(1.4)">*</span>32+O]:= </div><div class="cc" style="left:218.50px;color:#ff00ff;letter-spacing:1.00px">控制模式</div><div class="ca" style="left:290.50px;color:#000000">;</div></div><div class="cd" style="left:486px;top:296px"><div class="ca" style="color:#008000">7</div></div><div class="cd" style="left:515px;top:296px;width:1170px"><div class="ca" style="left:0.00px;color:#0000ff">END_IF</div><div class="ca" style="left:54.00px;color:#000000">;</div></div><div class="cd" style="left:486px;top:316px"><div class="ca" style="color:#008000">8</div></div><div class="cd" style="left:486px;top:336px"><div class="ca" style="color:#008000">9</div></div><div class="cd" style="left:515px;top:336px;width:1170px"><div class="ca" style="left:0.00px;color:#0000ff">IF </div><div class="ca" style="left:27.00px;color:#000000">LDF(SM4OO,</div><div class="cc" style="left:117.00px;color:#ff00ff;letter-spacing:1.00px">回原模式</div><div class="ca" style="left:189.00px;color:#ff00ff">EN</div><div class="ca" style="left:207.00px;color:#000000">)</div><div class="ca" style="left:216.00px;color:#0000ff"> THEN</div></div><div class="cd" style="left:477px;top:356px"><div class="ca" style="color:#008000">1O</div></div><div class="cd" style="left:515px;top:356px;width:1170px"><div class="cc" style="left:36.00px;color:#ff00ff;letter-spacing:1.00px">控制指令</div><div class="ca" style="left:108.00px;color:#000000"> := HOF;</div></div><div class="cd" style="left:477px;top:376px"><div class="ca" style="color:#008000">11</div></div><div class="cd" style="left:515px;top:376px;width:1170px"><div class="ca" style="left:36.00px;color:#008000">//</div><div class="cc" style="left:54.00px;color:#008000;letter-spacing:1.00px">控制指令</div></div><div class="cd" style="left:477px;top:396px"><div class="ca" style="color:#008000">12</div></div><div class="cd" style="left:515px;top:396px;width:1170px"><div class="ca" style="left:36.00px;color:#ff00ff">JEC.RWw</div><div class="ca" style="left:99.00px;color:#000000">[</div><div class="cs" style="left:108.00px;color:#ff00ff;letter-spacing:0.25px">轴号</div><div class="ca" style="left:137.50px;color:#000000"><span style="display:inline-block;transform:translateY(6.5px) scale(1.4)">*</span>32+1]:= </div><div class="cc" style="left:218.50px;color:#ff00ff;letter-spacing:1.00px">控制指令</div><div class="ca" style="left:290.50px;color:#000000">;</div></div><div class="cd" style="left:477px;top:416px"><div class="ca" style="color:#008000">13</div></div><div class="cd" style="left:515px;top:416px;width:1170px"><div class="ca" style="left:0.00px;color:#0000ff">END_IF</div><div class="ca" style="left:54.00px;color:#000000">;</div></div><div class="cd" style="left:477px;top:436px"><div class="ca" style="color:#008000">14</div></div><div class="cd" style="left:477px;top:456px"><div class="ca" style="color:#008000">15</div></div><div class="cd" style="left:515px;top:456px;width:1170px"><div class="ca" style="left:0.00px;color:#008000">//</div><div class="cs" style="left:18.00px;color:#008000;letter-spacing:0.25px">显示控制模式</div></div><div class="cd" style="left:477px;top:476px"><div class="ca" style="color:#008000">16</div></div><div class="cd" style="left:515px;top:476px;width:1170px"><div class="cs" style="left:0.00px;color:#ff00ff;letter-spacing:0.25px">控制模式显示</div><div class="ca" style="left:88.50px;color:#000000"> := </div><div class="ca" style="left:124.50px;color:#ff00ff">JEC.RWr</div><div class="ca" style="left:187.50px;color:#000000">[</div><div class="cs" style="left:196.50px;color:#ff00ff;letter-spacing:0.25px">轴号</div><div class="ca" style="left:226.00px;color:#000000"><span style="display:inline-block;transform:translateY(6.5px) scale(1.4)">*</span>32+O];</div></div><div class="cd" style="left:477px;top:496px"><div class="ca" style="color:#008000">17</div></div><div class="cd" style="left:477px;top:516px"><div class="ca" style="color:#008000">18</div></div><div class="cd" style="left:515px;top:516px;width:1170px"><div class="ca" style="left:0.00px;color:#0000ff">IF </div><div class="cs" style="left:27.00px;color:#ff00ff;letter-spacing:0.25px">控制模式显示</div><div class="ca" style="left:115.50px;color:#000000"> = </div><div class="cc" style="left:142.50px;color:#ff00ff;letter-spacing:1.00px">控制模式</div><div class="ca" style="left:214.50px;color:#000000"> &amp; </div><div class="cc" style="left:241.50px;color:#ff00ff;letter-spacing:1.00px">回原模式</div><div class="ca" style="left:313.50px;color:#ff00ff">EN</div><div class="ca" style="left:331.50px;color:#000000"> = </div><div class="ca" style="left:358.50px;color:#0000ff">TRUE THEN</div></div><div class="cd" style="left:477px;top:536px"><div class="ca" style="color:#008000">19</div></div><div class="cd" style="left:477px;top:556px"><div class="ca" style="color:#008000">2O</div></div><div class="cd" style="left:515px;top:556px;width:1170px"><div class="ca" style="left:72.00px;color:#0000ff">IF </div><div class="ca" style="left:99.00px;color:#000000">LDP(SM4OO,</div><div class="cs" style="left:189.00px;color:#ff00ff;letter-spacing:0.25px">启动</div><div class="ca" style="left:218.50px;color:#000000">)</div><div class="ca" style="left:227.50px;color:#0000ff"> THEN</div></div><div class="cd" style="left:477px;top:576px"><div class="ca" style="color:#008000">21</div></div><div class="cd" style="left:515px;top:576px;width:1170px"><div class="cc" style="left:108.00px;color:#ff00ff;letter-spacing:1.00px">控制指令</div><div class="ca" style="left:180.00px;color:#000000"> :=  H1F;</div></div><div class="cd" style="left:477px;top:596px"><div class="ca" style="color:#008000">22</div></div><div class="cd" style="left:515px;top:596px;width:1170px"><div class="ca" style="left:108.00px;color:#008000">//</div><div class="cc" style="left:126.00px;color:#008000;letter-spacing:1.00px">控制指令</div></div><div class="cd" style="left:477px;top:616px"><div class="ca" style="color:#008000">23</div></div><div class="cd" style="left:515px;top:616px;width:1170px"><div class="ca" style="left:108.00px;color:#ff00ff">JEC.RWw</div><div class="ca" style="left:171.00px;color:#000000">[</div><div class="cs" style="left:180.00px;color:#ff00ff;letter-spacing:0.25px">轴号</div><div class="ca" style="left:209.50px;color:#000000"><span style="display:inline-block;transform:translateY(6.5px) scale(1.4)">*</span>32+1]:= </div><div class="cc" style="left:290.50px;color:#ff00ff;letter-spacing:1.00px">控制指令</div><div class="ca" style="left:362.50px;color:#000000">;</div></div><div class="cd" style="left:477px;top:636px"><div class="ca" style="color:#008000">24</div></div><div class="cd" style="left:515px;top:636px;width:1170px"><div class="ca" style="left:72.00px;color:#0000ff">END_IF</div><div class="ca" style="left:126.00px;color:#000000">;</div></div><div class="cd" style="left:477px;top:656px"><div class="ca" style="color:#008000">25</div></div><div class="cd" style="left:477px;top:676px"><div class="ca" style="color:#008000">26</div></div><div class="cd" style="left:515px;top:676px;width:1170px"><div class="ca" style="left:72.00px;color:#0000ff">IF </div><div class="ca" style="left:99.00px;color:#000000">LDF(SM4OO,</div><div class="cs" style="left:189.00px;color:#ff00ff;letter-spacing:0.25px">启动</div><div class="ca" style="left:218.50px;color:#000000">)</div><div class="ca" style="left:227.50px;color:#0000ff"> THEN</div></div><div class="cd" style="left:477px;top:696px"><div class="ca" style="color:#008000">27</div></div><div class="cd" style="left:515px;top:696px;width:1170px"><div class="cc" style="left:108.00px;color:#ff00ff;letter-spacing:1.00px">控制指令</div><div class="ca" style="left:180.00px;color:#000000"> := HOF;</div></div><div class="cd" style="left:477px;top:716px"><div class="ca" style="color:#008000">28</div></div><div class="cd" style="left:515px;top:716px;width:1170px"><div class="ca" style="left:108.00px;color:#008000">//</div><div class="cc" style="left:126.00px;color:#008000;letter-spacing:1.00px">控制指令</div></div><div class="cd" style="left:477px;top:736px"><div class="ca" style="color:#008000">29</div></div><div class="cd" style="left:515px;top:736px;width:1170px"><div class="ca" style="left:108.00px;color:#ff00ff">JEC.RWw</div><div class="ca" style="left:171.00px;color:#000000">[</div><div class="cs" style="left:180.00px;color:#ff00ff;letter-spacing:0.25px">轴号</div><div class="ca" style="left:209.50px;color:#000000"><span style="display:inline-block;transform:translateY(6.5px) scale(1.4)">*</span>32+1]:= </div><div class="cc" style="left:290.50px;color:#ff00ff;letter-spacing:1.00px">控制指令</div><div class="ca" style="left:362.50px;color:#000000">;</div></div><div class="cd" style="left:477px;top:756px"><div class="ca" style="color:#008000">3O</div></div><div class="cd" style="left:515px;top:756px;width:1170px"><div class="ca" style="left:72.00px;color:#0000ff">END_IF</div><div class="ca" style="left:126.00px;color:#000000">;</div></div><div class="cd" style="left:477px;top:776px"><div class="ca" style="color:#008000">31</div></div><div class="cd" style="left:477px;top:796px"><div class="ca" style="color:#008000">32</div></div><div class="cd" style="left:515px;top:796px;width:1170px"><div class="ca" style="left:36.00px;color:#008000">//</div><div class="cc" style="left:54.00px;color:#008000;letter-spacing:1.00px">回原完成信号</div></div><div class="cd" style="left:477px;top:816px"><div class="ca" style="color:#008000">33</div></div><div class="cd" style="left:515px;top:816px;width:1170px"><div class="cs" style="left:36.00px;color:#ff00ff;letter-spacing:0.25px">控制状态</div><div class="ca" style="left:95.00px;color:#000000">:=</div><div class="ca" style="left:113.00px;color:#ff00ff">JEC.RWr</div><div class="ca" style="left:176.00px;color:#000000">[</div><div class="cs" style="left:185.00px;color:#ff00ff;letter-spacing:0.25px">轴号</div><div class="ca" style="left:214.50px;color:#000000"><span style="display:inline-block;transform:translateY(6.5px) scale(1.4)">*</span>32+2];</div></div><div class="cd" style="left:477px;top:836px"><div class="ca" style="color:#008000">34</div></div><div class="cd" style="left:515px;top:836px;width:1170px"><div class="ca" style="left:0.00px;color:#000000">    OUTHS(</div><div class="cs" style="left:90.00px;color:#ff00ff;letter-spacing:0.25px">控制状态</div><div class="ca" style="left:149.00px;color:#ff00ff">.C</div><div class="ca" style="left:167.00px;color:#000000">,</div><div class="cs" style="left:176.00px;color:#ff00ff;letter-spacing:0.25px">计时</div><div class="ca" style="left:205.50px;color:#000000">,K3OO);</div></div><div class="cd" style="left:477px;top:856px"><div class="ca" style="color:#008000">35</div></div><div class="cd" style="left:515px;top:856px;width:1170px"><div class="ca" style="left:0.00px;color:#000000">    OUT(</div><div class="cs" style="left:72.00px;color:#ff00ff;letter-spacing:0.25px">计时</div><div class="ca" style="left:101.50px;color:#ff00ff">.S</div><div class="ca" style="left:119.50px;color:#000000">,</div><div class="cc" style="left:128.50px;color:#ff00ff;letter-spacing:1.00px">回原完成</div><div class="ca" style="left:200.50px;color:#000000">);</div></div><div class="cd" style="left:477px;top:876px"><div class="ca" style="color:#008000">36</div></div><div class="cd" style="left:477px;top:896px"><div class="ca" style="color:#008000">37</div></div><div class="cd" style="left:515px;top:896px;width:1170px"><div class="ca" style="left:0.00px;color:#0000ff">END_IF</div><div class="ca" style="left:54.00px;color:#000000">;</div></div><div class="cd" style="left:477px;top:916px"><div class="ca" style="color:#008000">38</div></div><div class="cd" style="left:477px;top:936px"><div class="ca" style="color:#008000">39</div></div><div class="cd" style="left:515px;top:936px;width:1170px"><div class="ca" style="left:0.00px;color:#008000">//</div><div class="cc" style="left:18.00px;color:#008000;letter-spacing:1.00px">当前位置双字</div><div class="ca" style="left:126.00px;color:#008000">[O] :=JEC.RWr[</div><div class="cs" style="left:252.00px;color:#008000;letter-spacing:0.25px">轴号</div><div class="ca" style="left:281.50px;color:#008000"><span style="display:inline-block;transform:translateY(6.5px) scale(1.4)">*</span>32+3];</div></div></div></div><svg style="left:1692px;top:179px" width="16" height="18"><path d="M2 8.5h12M2 10.5h12" stroke="#111" stroke-width="1.3"/><path d="M8 1v6M8 12v6" stroke="#111" stroke-width="1.3"/><path d="M5.5 4L8 1.5 10.5 4M5.5 15L8 17.5 10.5 15" stroke="#111" stroke-width="1.3" fill="none"/></svg><svg style="left:1693px;top:203px" width="14" height="10"><path d="M2 7.5l5-5 5 5" stroke="#555" stroke-width="1.8" fill="none"/></svg><div style="left:1691px;top:219px;width:18px;height:613px;background:#c2c2c2"></div><svg style="left:1693px;top:936px" width="14" height="10"><path d="M2 2.5l5 5 5-5" stroke="#555" stroke-width="1.8" fill="none"/></svg><svg style="left:452px;top:956px" width="10" height="14"><path d="M7.5 2l-5 5 5 5" stroke="#b8b8b8" stroke-width="1.6" fill="none"/></svg><svg style="left:1674px;top:956px" width="10" height="14"><path d="M2.5 2l5 5-5 5" stroke="#b8b8b8" stroke-width="1.6" fill="none"/></svg><div style="left:1718px;top:142px;width:202px;height:28px;background:linear-gradient(#4c5f84,#3d4f73);border-radius:3px 0 0 0"></div><div class="t" style="left:1725px;top:147px;color:#fff">部件选择</div><div style="left:1720px;top:170px;width:200px;height:388px;background:#b9c5d8"></div><div style="left:1725px;top:174px;width:195px;height:26px;background:#fff;border:1px solid #99a"></div><div class="t" style="left:1730px;top:177px;color:#6a6a6a">(部件搜索)</div><div style="left:1723px;top:307px;width:195px;height:251px;background:#d6e6f8;border:1px solid #6e8fc0;border-top:2px solid #f0a850"></div><div style="left:1718px;top:558px;width:202px;height:8px;background:#2e3f5e"></div><div style="left:1720px;top:564px;width:200px;height:29px;background:linear-gradient(#4c5f84,#3d4f73);border-radius:4px 0 0 0"></div><div class="t" style="left:1725px;top:570px;color:#fff">配置详细信息输入</div><svg style="left:1879px;top:149px" width="36" height="14"><path d="M3 1.5h7M4.5 1.5v7M8.5 1.5v7M2.5 8.5h8M6.5 8.5v5" stroke="#fff" stroke-width="1.4" fill="none"/><path d="M24 2.5l8 8M32 2.5l-8 8" stroke="#fff" stroke-width="1.6"/></svg><svg style="left:1879px;top:572px" width="36" height="14"><path d="M3 1.5h7M4.5 1.5v7M8.5 1.5v7M2.5 8.5h8M6.5 8.5v5" stroke="#fff" stroke-width="1.4" fill="none"/><path d="M24 2.5l8 8M32 2.5l-8 8" stroke="#fff" stroke-width="1.6"/></svg><svg style="left:1728px;top:205px" width="26" height="22"><g transform="translate(5,0)"><rect x="2" y="0" width="4" height="6" fill="#8c8c8c"/><rect x="10" y="0" width="4" height="6" fill="#8c8c8c"/><rect x="0" y="6" width="7" height="14" fill="#8c8c8c"/><rect x="9" y="6" width="7" height="14" fill="#8c8c8c"/><rect x="6" y="8" width="4" height="5" fill="#8c8c8c"/><rect x="2" y="9" width="2" height="6" fill="#d4d4d4"/><rect x="11" y="9" width="2" height="6" fill="#d4d4d4"/><rect x="3" y="1.5" width="2" height="3" fill="#d4d4d4"/><rect x="11" y="1.5" width="2" height="3" fill="#d4d4d4"/></g><path d="M0 15l6-5v3h4v4H6v3z" fill="#9a9a9a"/></svg><svg style="left:1756px;top:205px" width="26" height="22"><g transform="translate(0,0)"><rect x="2" y="0" width="4" height="6" fill="#8c8c8c"/><rect x="10" y="0" width="4" height="6" fill="#8c8c8c"/><rect x="0" y="6" width="7" height="14" fill="#8c8c8c"/><rect x="9" y="6" width="7" height="14" fill="#8c8c8c"/><rect x="6" y="8" width="4" height="5" fill="#8c8c8c"/><rect x="2" y="9" width="2" height="6" fill="#d4d4d4"/><rect x="11" y="9" width="2" height="6" fill="#d4d4d4"/><rect x="3" y="1.5" width="2" height="3" fill="#d4d4d4"/><rect x="11" y="1.5" width="2" height="3" fill="#d4d4d4"/></g><path d="M22 15l-6-5v3h-4v4h4v3z" fill="#9a9a9a"/></svg><svg style="left:1785px;top:206px" width="26" height="22"><g transform="translate(2,0)"><rect x="2" y="0" width="4" height="6" fill="#8c8c8c"/><rect x="10" y="0" width="4" height="6" fill="#8c8c8c"/><rect x="0" y="6" width="7" height="14" fill="#8c8c8c"/><rect x="9" y="6" width="7" height="14" fill="#8c8c8c"/><rect x="6" y="8" width="4" height="5" fill="#8c8c8c"/><rect x="2" y="9" width="2" height="6" fill="#d4d4d4"/><rect x="11" y="9" width="2" height="6" fill="#d4d4d4"/><rect x="3" y="1.5" width="2" height="3" fill="#d4d4d4"/><rect x="11" y="1.5" width="2" height="3" fill="#d4d4d4"/></g></svg><div style="left:1812px;top:206px;width:1px;height:22px;background:#8d9bb2;box-shadow:1px 0 0 #e4eaf3"></div><svg style="left:1820px;top:205px" width="26" height="22"><circle cx="8" cy="8" r="6.5" fill="#9c9c9c"/><rect x="6" y="9" width="15" height="12" fill="#d8d8d8" stroke="#8c8c8c"/><path d="M7 13h13M7 17h13M12 9v12" stroke="#9a9a9a"/><path d="M15 2v7M11.5 5.5h7" stroke="#9a9a9a" stroke-width="2.5"/></svg><div style="left:1728px;top:234px;width:192px;height:2px;background:#f8fafc"></div><svg style="left:1731px;top:241px" width="26" height="22"><rect x="1.5" y="2" width="14" height="13" fill="#dcdcdc" stroke="#8c8c8c"/><path d="M3 4h11M3 7h11" stroke="#c0c0c0"/><path d="M8 11v10M3.5 16h9" stroke="#8c8c8c" stroke-width="3"/><path d="M17 12h7l-3.5 3z" fill="#b09060"/></svg><svg style="left:1766px;top:241px" width="26" height="22"><rect x="1.5" y="2" width="16" height="13" fill="#dcdcdc" stroke="#8c8c8c"/><path d="M3 4h13M3 7h13" stroke="#c0c0c0"/><path d="M6 11l10 9M16 11l-10 9" stroke="#444" stroke-width="2.5"/></svg><div style="left:1793px;top:241px;width:1px;height:22px;background:#8d9bb2;box-shadow:1px 0 0 #e4eaf3"></div><svg style="left:1800px;top:241px" width="26" height="22"><rect x="1" y="4" width="10" height="15" fill="#d0d0d0" stroke="#999"/><rect x="7" y="1" width="9" height="8" fill="#aaa"/><rect x="6" y="7" width="16" height="14" fill="#9a9a9a"/><rect x="4" y="10" width="6" height="4" fill="#eee"/><rect x="10" y="12" width="3" height="7" fill="#666"/></svg><div style="left:1728px;top:270px;width:192px;height:2px;background:#f8fafc"></div><svg style="left:1727px;top:277px" width="26" height="22"><path d="M11 1l3.2 6.8 7.3.8-5.4 5 1.5 7.2L11 17.2 4.4 20.8l1.5-7.2-5.4-5 7.3-.8z" fill="#c8c8c8" stroke="#8c8c8c" stroke-width="1.2"/></svg><svg style="left:1756px;top:277px" width="26" height="22"><path d="M1.5 7.5h7l2 2h10v11h-19z" fill="#d4d4d4" stroke="#8c8c8c"/><path d="M2 21h19" stroke="#777" stroke-width="1.5"/><path d="M4 0v7M.5 3.5h7" stroke="#bbb" stroke-width="2"/></svg><svg style="left:1785px;top:277px" width="26" height="22"><path d="M2 2l16 17M18 2L2 19" stroke="#7c7c7c" stroke-width="2.5"/></svg><div style="left:1812px;top:277px;width:1px;height:22px;background:#8d9bb2;box-shadow:1px 0 0 #e4eaf3"></div><svg style="left:1821px;top:277px" width="28" height="22"><path d="M1.5 5.5h6l2 2h12v13h-20z" fill="#d4d4d4" stroke="#8c8c8c"/><rect x="4" y="11" width="12" height="2" fill="#666"/><rect x="7" y="13" width="2" height="6" fill="#666"/><rect x="12" y="13" width="2" height="6" fill="#666"/><path d="M22 12h5l-2.5 3z" fill="#b09060"/></svg><div style="left:1725px;top:309px;width:191px;height:27px;background:#f0f0f0"></div><div class="t" style="left:1734px;top:313px;color:#111">显示对象:</div><div style="left:1886px;top:310px;width:30px;height:25px;background:#e4e4e4;border:1px solid #aaa"></div><svg style="left:1895px;top:318px" width="12" height="8"><path d="M1.5 1.5l4.5 4.5 4.5-4.5" stroke="#444" stroke-width="1.3" fill="none"/></svg><div style="left:1725px;top:336px;width:191px;height:157px;background:#f0f0f0;border:1px solid #6c8ebf;overflow:hidden"><div style="left:0;top:0px;width:169px;height:25px;background:#d5e6fb;border-bottom:1px solid #334a70"></div><div class="t" style="left:4px;top:1px;color:#27344d;font-weight:bold;font-size:14px">顺序指令</div><div style="left:0;top:25px;width:169px;height:25px;background:#d5e6fb;border-bottom:1px solid #334a70"></div><div class="t" style="left:20px;top:26px;color:#27344d;font-weight:bold;font-size:14px">触点指令</div><div style="left:0;top:50px;width:169px;height:25px;background:#d5e6fb;border-bottom:1px solid #334a70"></div><div class="t" style="left:20px;top:51px;color:#27344d;font-weight:bold;font-size:14px">合并指令</div><div style="left:0;top:75px;width:169px;height:25px;background:#d5e6fb;border-bottom:1px solid #334a70"></div><div class="t" style="left:20px;top:76px;color:#27344d;font-weight:bold;font-size:14px">输出指令</div><div style="left:0;top:100px;width:169px;height:25px;background:#d5e6fb;border-bottom:1px solid #334a70"></div><div class="t" style="left:20px;top:101px;color:#27344d;font-weight:bold;font-size:14px">移位指令</div><div style="left:0;top:125px;width:169px;height:25px;background:#d5e6fb;border-bottom:1px solid #334a70"></div><div class="t" style="left:20px;top:126px;color:#27344d;font-weight:bold;font-size:14px">主控指令</div><div style="left:0;top:150px;width:169px;height:25px;background:#d5e6fb;border-bottom:1px solid #334a70"></div><div class="t" style="left:20px;top:151px;color:#27344d;font-weight:bold;font-size:14px">停止指令</div><svg style="left:172px;top:6px" width="14" height="10"><path d="M2 7.5l5-5 5 5" stroke="#444" stroke-width="1.6" fill="none"/></svg><div style="left:170px;top:22px;width:18px;height:20px;background:#c8c8c8"></div><svg style="left:172px;top:141px" width="14" height="10"><path d="M2 2.5l5 5 5-5" stroke="#444" stroke-width="1.6" fill="none"/></svg></div><div style="left:1725px;top:495px;width:191px;height:4px;background:#334a70"></div><div style="left:1725px;top:499px;width:191px;height:29px;background:#d5e6fb;border:1px solid #6c8ebf;border-top:0"></div><div style="left:1722px;top:529px;width:198px;height:28px;background:linear-gradient(90deg,#dfeafa,#c9dbf5 80%,#eef4fc)"></div><div style="left:1724px;top:529px;width:41px;height:28px;background:linear-gradient(#fcc27c,#fde9d4);border-bottom:2px solid #2050c0"></div><div class="t" style="left:1729px;top:533px;color:#111">部...</div><div style="left:1765px;top:530px;width:38px;height:25px;background:linear-gradient(#a9c5f1,#d8e7fb);border:2px solid #1f45b5;border-top:1px solid #1f45b5;border-radius:0 0 3px 3px"></div><div class="t" style="left:1770px;top:533px;color:#111">收..</div><div style="left:1804px;top:530px;width:38px;height:25px;background:linear-gradient(#a9c5f1,#d8e7fb);border:2px solid #1f45b5;border-top:1px solid #1f45b5;border-radius:0 0 3px 3px"></div><div class="t" style="left:1809px;top:533px;color:#111">履..</div><div style="left:1843px;top:530px;width:38px;height:25px;background:linear-gradient(#a9c5f1,#d8e7fb);border:2px solid #1f45b5;border-top:1px solid #1f45b5;border-radius:0 0 3px 3px"></div><div class="t" style="left:1848px;top:533px;color:#111">模..</div><div style="left:1882px;top:530px;width:30px;height:25px;background:linear-gradient(#a9c5f1,#d8e7fb);border:2px solid #1f45b5;border-top:1px solid #1f45b5;border-radius:0 0 3px 3px"></div><div class="t" style="left:1887px;top:533px;color:#111">库</div><div style="left:1720px;top:592px;width:200px;height:388px;background:#8a8f98"></div><div style="left:1722px;top:594px;width:198px;height:386px;background:#6a9ad8"></div><div style="left:1723px;top:595px;width:195px;height:307px;background:#35486a"></div><div style="left:1722px;top:902px;width:196px;height:76px;background:#d6e6f8;border:1px solid #6e9ad3;border-top:4px solid #a8c8f0"></div><div style="left:0px;top:980px;width:1920px;height:26px;background:#2b3856"></div><div style="left:0px;top:1005px;width:1920px;height:6px;background:#0c0f18"></div><div style="left:494px;top:1005px;width:60px;height:6px;background:#3a3c44"></div><div style="left:985px;top:983px;width:1px;height:20px;background:#c0c8d8"></div><div style="left:1170px;top:983px;width:1px;height:20px;background:#c0c8d8"></div><div style="left:1315px;top:983px;width:1px;height:20px;background:#c0c8d8"></div><div style="left:1430px;top:983px;width:1px;height:20px;background:#c0c8d8"></div><div style="left:1585px;top:983px;width:1px;height:20px;background:#c0c8d8"></div><div style="left:1750px;top:983px;width:1px;height:20px;background:#c0c8d8"></div><div style="left:1825px;top:983px;width:1px;height:20px;background:#c0c8d8"></div><div style="left:1868px;top:983px;width:1px;height:20px;background:#c0c8d8"></div><div class="t" style="left:1323px;top:986px;color:#fff">FX5U</div><div class="t" style="left:1438px;top:986px;color:#fff">本站</div><div class="t" style="left:1593px;top:986px;color:#fff">行: 1</div><div class="t" style="left:1758px;top:986px;color:#fff">插入</div><div class="t" style="left:1832px;top:986px;color:#707a8c">CAP</div><div class="t" style="left:1876px;top:986px;color:#fff">NUM</div></body></html>
